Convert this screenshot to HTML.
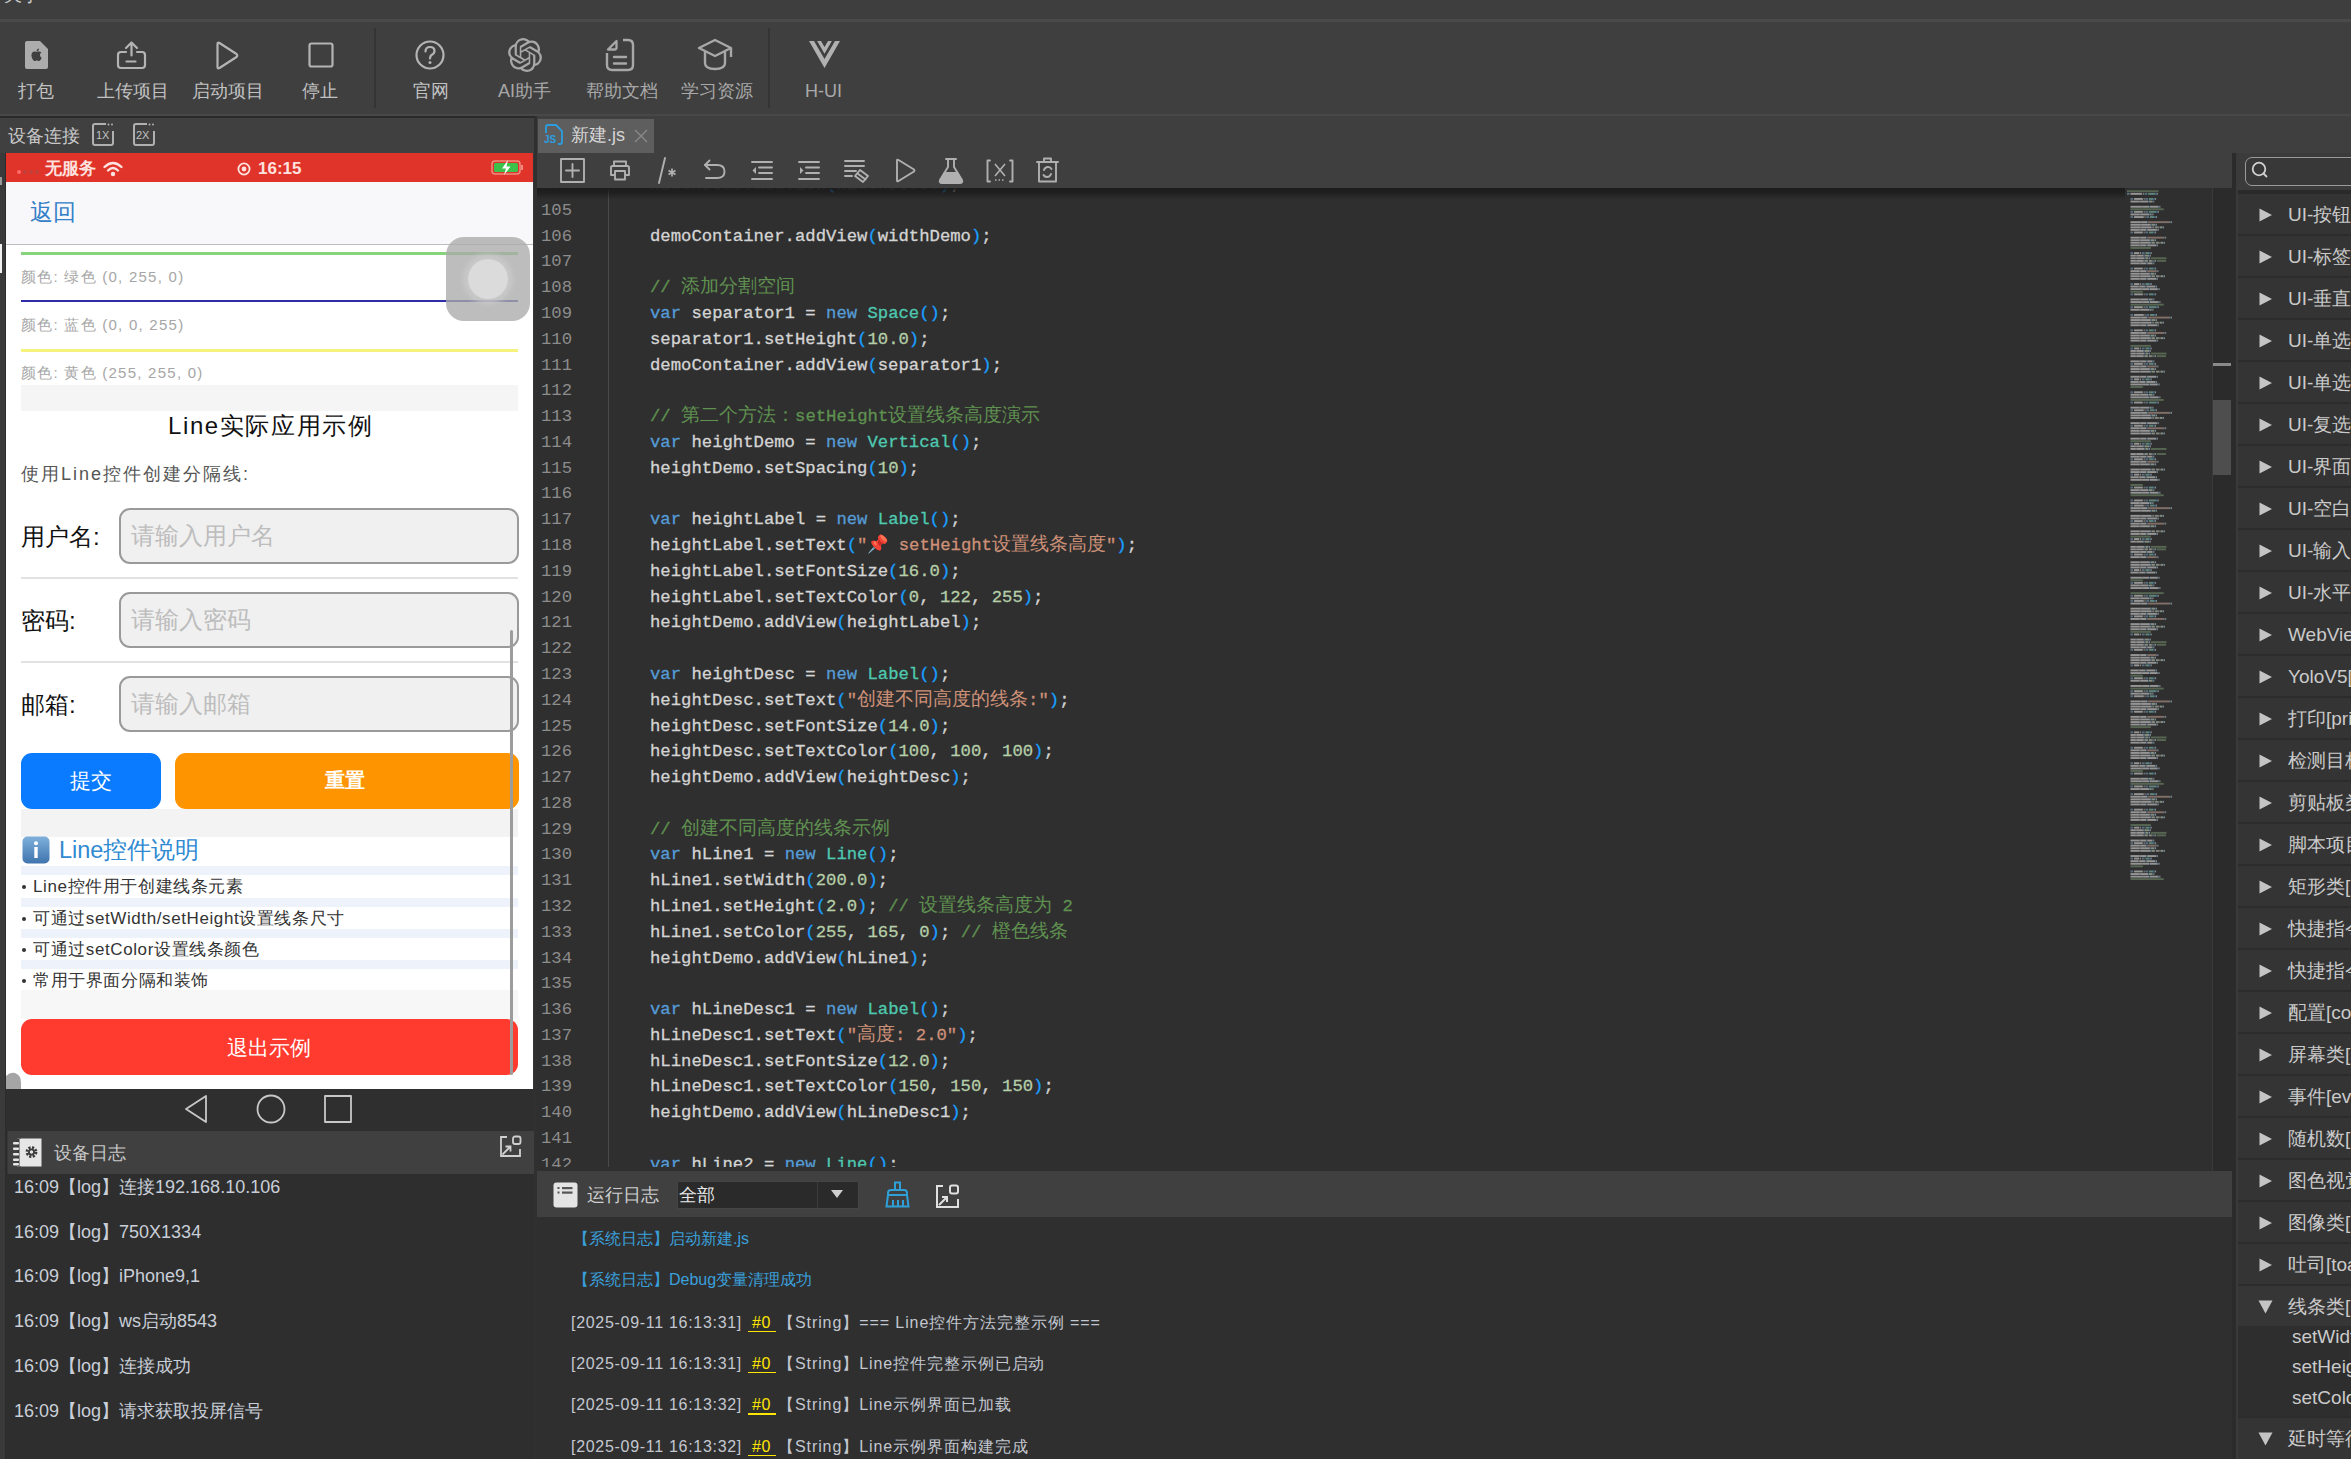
<!DOCTYPE html>
<html><head><meta charset="utf-8">
<style>
*{margin:0;padding:0;box-sizing:border-box}
html,body{width:2351px;height:1459px;overflow:hidden;background:#3e3e3e;font-family:"Liberation Sans",sans-serif;color:#bbb}
.a{position:absolute}
.t{position:absolute;white-space:nowrap;line-height:1}
svg.i{position:absolute;overflow:visible}
.m{font-family:"Liberation Mono",monospace}
</style></head><body>
<div class="a" style="left:0px;top:0px;width:2351px;height:19px;background:#3e3e3e;"></div>
<div class="t" style="left:4px;top:-14px;font-size:18px;color:#ccc;">关于</div>
<div class="a" style="left:0px;top:19px;width:2351px;height:3px;background:#4a4a4a;"></div>
<div class="a" style="left:0px;top:22px;width:2351px;height:94px;background:#3f3f3f;"></div>
<div class="a" style="left:374px;top:28px;width:2px;height:80px;background:#343434;"></div>
<div class="a" style="left:768px;top:28px;width:2px;height:80px;background:#343434;"></div>
<div class="a" style="left:0px;top:114px;width:2351px;height:2px;background:#484848;"></div>
<div class="a" style="left:0px;top:117px;width:535px;height:1342px;background:#363636;"></div>
<div class="a" style="left:0px;top:117px;width:535px;height:36px;background:#404040;"></div>
<div class="a" style="left:0px;top:116px;width:535px;height:1.5px;background:#2a2a2a;"></div>
<div class="a" style="left:0px;top:153px;width:6px;height:1306px;background:#3a3a3a;"></div>
<div class="a" style="left:5px;top:153px;width:1.5px;height:1306px;background:#2c2c2c;"></div>
<div class="a" style="left:0px;top:244px;width:1.5px;height:29px;background:#f0f0f0;"></div>
<div class="a" style="left:0px;top:177px;width:1.5px;height:8px;background:#9a9a9a;"></div>
<div class="a" style="left:534px;top:116px;width:3px;height:1343px;background:#303030;"></div>
<div class="a" style="left:537px;top:116px;width:1814px;height:37px;background:#3f3f3f;"></div>
<div class="a" style="left:537px;top:153px;width:1695px;height:35px;background:#3f3f3f;"></div>
<div class="a" style="left:537px;top:188px;width:1695px;height:983px;background:#2f2f2f;"></div>
<div class="a" style="left:537px;top:1171px;width:1695px;height:288px;background:#2f2f2f;"></div>
<div class="a" style="left:2232px;top:153px;width:6px;height:1306px;background:#2b2b2b;"></div>
<div class="a" style="left:2238px;top:153px;width:113px;height:1306px;background:#2c2c2c;"></div>
<div class="t" style="left:18px;top:82px;font-size:18px;color:#c2c2c2;">打包</div>
<div class="t" style="left:97px;top:82px;font-size:18px;color:#c2c2c2;">上传项目</div>
<div class="t" style="left:192px;top:82px;font-size:18px;color:#c2c2c2;">启动项目</div>
<div class="t" style="left:302px;top:82px;font-size:18px;color:#c2c2c2;">停止</div>
<div class="t" style="left:413px;top:82px;font-size:18px;color:#c2c2c2;">官网</div>
<div class="t" style="left:498px;top:82px;font-size:18px;color:#a8a8a8;">AI助手</div>
<div class="t" style="left:586px;top:82px;font-size:18px;color:#a8a8a8;">帮助文档</div>
<div class="t" style="left:681px;top:82px;font-size:18px;color:#a8a8a8;">学习资源</div>
<div class="t" style="left:805px;top:82px;font-size:18px;color:#aaaaaa;">H-UI</div>
<svg class="i" style="left:23px;top:40px" width="26" height="30" viewBox="0 0 26 30"><path d="M2 3 Q2 1 4 1 L17 1 L25 9 L25 27 Q25 29 23 29 L4 29 Q2 29 2 27 Z" fill="#acacac"/><g transform="translate(7.3 8.5) scale(0.52)"><path fill="#3f3f3f" d="M12.152 6.896c-.948 0-2.415-1.078-3.96-1.04-2.04.027-3.91 1.183-4.961 3.014-2.117 3.675-.546 9.103 1.519 12.09 1.013 1.454 2.208 3.09 3.792 3.039 1.52-.065 2.09-.987 3.935-.987 1.831 0 2.35.987 3.96.948 1.637-.026 2.676-1.48 3.676-2.948 1.156-1.688 1.636-3.325 1.662-3.415-.039-.013-3.182-1.221-3.22-4.857-.026-3.04 2.48-4.494 2.597-4.559-1.429-2.09-3.623-2.324-4.39-2.376-2-.156-3.675 1.09-4.61 1.09zM15.53 3.83c.843-1.012 1.4-2.427 1.245-3.83-1.207.052-2.662.805-3.532 1.818-.78.896-1.454 2.338-1.273 3.714 1.338.104 2.715-.688 3.559-1.701"/></g></svg>
<svg class="i" style="left:116px;top:40px" width="31" height="30" viewBox="0 0 31 30"><path d="M10 12 H5 Q2 12 2 15 V25 Q2 28 5 28 H26 Q29 28 29 25 V15 Q29 12 26 12 H21" fill="none" stroke="#b4b4b4" stroke-width="2.2" stroke-linecap="round" stroke-linejoin="round"/><path d="M15.5 15.5 V3 M10 8 L15.5 2.5 L21 8" fill="none" stroke="#b4b4b4" stroke-width="2.2" stroke-linecap="round" stroke-linejoin="round"/><path d="M10.5 21.5 H19.5" fill="none" stroke="#b4b4b4" stroke-width="2.2" stroke-linecap="round" stroke-linejoin="round"/></svg>
<svg class="i" style="left:215px;top:41px" width="24" height="29" viewBox="0 0 24 29"><path d="M2.5 3 Q2.5 1 4.5 2 L21.5 13 Q23 14.5 21.5 16 L4.5 27 Q2.5 28 2.5 26 Z" fill="none" stroke="#b4b4b4" stroke-width="2.2" stroke-linecap="round" stroke-linejoin="round"/></svg>
<svg class="i" style="left:308px;top:42px" width="26" height="26" viewBox="0 0 26 26"><rect x="1.5" y="1.5" width="23" height="23" rx="2" fill="none" stroke="#b4b4b4" stroke-width="2.2" stroke-linecap="round" stroke-linejoin="round"/></svg>
<svg class="i" style="left:415px;top:40px" width="30" height="30" viewBox="0 0 30 30"><circle cx="15" cy="15" r="13.5" fill="none" stroke="#b4b4b4" stroke-width="2.2" stroke-linecap="round" stroke-linejoin="round"/><path d="M10.5 11.5 Q10.5 7 15 7 Q19.5 7 19.5 11 Q19.5 13.5 16.5 15 Q15 16 15 18.5" fill="none" stroke="#b4b4b4" stroke-width="2.2" stroke-linecap="round" stroke-linejoin="round"/><circle cx="15" cy="22.5" r="1.5" fill="#b4b4b4"/></svg>
<svg class="i" style="left:508px;top:38px" width="34" height="34" viewBox="0 0 24 24"><path fill="#a8a8a8" d="M22.2819 9.8211a5.9847 5.9847 0 0 0-.5157-4.9108 6.0462 6.0462 0 0 0-6.5098-2.9A6.0651 6.0651 0 0 0 4.9807 4.1818a5.9847 5.9847 0 0 0-3.9977 2.9 6.0462 6.0462 0 0 0 .7427 7.0966 5.98 5.98 0 0 0 .511 4.9107 6.051 6.051 0 0 0 6.5146 2.9001A5.9847 5.9847 0 0 0 13.2599 24a6.0557 6.0557 0 0 0 5.7718-4.2058 5.9894 5.9894 0 0 0 3.9977-2.9001 6.0557 6.0557 0 0 0-.7475-7.0729zm-9.022 12.6081a4.4755 4.4755 0 0 1-2.8764-1.0408l.1419-.0804 4.7783-2.7582a.7948.7948 0 0 0 .3927-.6813v-6.7369l2.02 1.1686a.071.071 0 0 1 .038.052v5.5826a4.504 4.504 0 0 1-4.4945 4.4944zm-9.6607-4.1254a4.4708 4.4708 0 0 1-.5346-3.0137l.142.0852 4.783 2.7582a.7712.7712 0 0 0 .7806 0l5.8428-3.3685v2.3324a.0804.0804 0 0 1-.0332.0615L9.74 19.9502a4.4992 4.4992 0 0 1-6.1408-1.6464zM2.3408 7.8956a4.485 4.485 0 0 1 2.3655-1.9728V11.6a.7664.7664 0 0 0 .3879.6765l5.8144 3.3543-2.0201 1.1685a.0757.0757 0 0 1-.071 0l-4.8303-2.7865A4.504 4.504 0 0 1 2.3408 7.872zm16.5963 3.8558L13.1038 8.364 15.1192 7.2a.0757.0757 0 0 1 .071 0l4.8303 2.7913a4.4944 4.4944 0 0 1-.6765 8.1042v-5.6772a.79.79 0 0 0-.407-.667zm2.0107-3.0231l-.142-.0852-4.7735-2.7818a.7759.7759 0 0 0-.7854 0L9.409 9.2297V6.8974a.0662.0662 0 0 1 .0284-.0615l4.8303-2.7866a4.4992 4.4992 0 0 1 6.6802 4.66zM8.3065 12.863l-2.02-1.1638a.0804.0804 0 0 1-.038-.0567V6.0742a4.4992 4.4992 0 0 1 7.3757-3.4537l-.142.0805L8.704 5.459a.7948.7948 0 0 0-.3927.6813zm1.0976-2.3654l2.602-1.4998 2.6069 1.4998v2.9994l-2.5974 1.4997-2.6067-1.4997Z"/></svg>
<svg class="i" style="left:605px;top:38px" width="30" height="34" viewBox="0 0 30 34"><path d="M18 2 H23 Q28 2 28 7 V27 Q28 32 23 32 H7 Q2 32 2 27 V15" fill="none" stroke="#a8a8a8" stroke-width="2.4" stroke-linejoin="round"/><path d="M3 11.5 L11.5 3 V9.5 Q11.5 11.5 9.5 11.5 Z" fill="none" stroke="#a8a8a8" stroke-width="2.3" stroke-linejoin="round"/><path d="M9 19 H21 M9 25.5 H21" stroke="#a8a8a8" stroke-width="2.4" stroke-linecap="round"/></svg>
<svg class="i" style="left:697px;top:38px" width="36" height="34" viewBox="0 0 36 34"><path d="M18 2 L34 10 L18 18 L2 10 Z" fill="none" stroke="#a8a8a8" stroke-width="2.4" stroke-linejoin="round"/><path d="M8 14 V25 Q8 31 18 31 Q28 31 28 25 V14" fill="none" stroke="#a8a8a8" stroke-width="2.4"/><path d="M34 10 V19" stroke="#a8a8a8" stroke-width="2.4"/></svg>
<svg class="i" style="left:809px;top:41px" width="31" height="28" viewBox="0 0 31 28"><path d="M0 0 H12 L15.5 6 L19 0 H31 L15.5 27 Z" fill="#b0b0b0"/><path d="M6 -1 L15.5 15.5 L25 -1" fill="none" stroke="#3f3f3f" stroke-width="2.6"/></svg>
<div class="t" style="left:8px;top:128px;font-size:17.5px;color:#c8c8c8;">设备连接</div>
<svg class="i" style="left:91px;top:122px" width="24" height="25" viewBox="0 0 24 25"><path d="M15 2 H4 Q2 2 2 4 V21 Q2 23 4 23 H20 Q22 23 22 21 V9" fill="none" stroke="#b0b0b0" stroke-width="2"/><circle cx="17.5" cy="2.5" r="1" fill="#b0b0b0"/><circle cx="21" cy="2.5" r="1" fill="#b0b0b0"/></svg>
<div class="t" style="left:96px;top:130px;font-size:11px;color:#c0c0c0;">1X</div>
<svg class="i" style="left:132px;top:122px" width="24" height="25" viewBox="0 0 24 25"><path d="M15 2 H4 Q2 2 2 4 V21 Q2 23 4 23 H20 Q22 23 22 21 V9" fill="none" stroke="#b0b0b0" stroke-width="2"/><circle cx="17.5" cy="2.5" r="1" fill="#b0b0b0"/><circle cx="21" cy="2.5" r="1" fill="#b0b0b0"/></svg>
<div class="t" style="left:136px;top:130px;font-size:11px;color:#c0c0c0;">2X</div>
<div class="a" style="left:6px;top:153px;width:527px;height:936px;background:#ffffff;"></div>
<div class="a" style="left:6px;top:153px;width:527px;height:29px;background:#e0342b;"></div>
<div class="a" style="left:17px;top:170px;width:4px;height:4px;background:#ff6b6b;border-radius:2px"></div>
<div class="a" style="left:23px;top:170px;width:4px;height:4px;background:#c0403a;border-radius:2px"></div>
<div class="a" style="left:29px;top:170px;width:4px;height:4px;background:#c0403a;border-radius:2px"></div>
<div class="a" style="left:35px;top:170px;width:4px;height:4px;background:#c0403a;border-radius:2px"></div>
<div class="t" style="left:45px;top:160px;font-size:17px;color:#fde2df;font-weight:bold">无服务</div>
<svg class="i" style="left:103px;top:161px" width="20" height="16" viewBox="0 0 20 16"><path d="M1.5 6 Q10 -2 18.5 6" fill="none" stroke="#fde2df" stroke-width="2.4" stroke-linecap="round"/><path d="M5 9.5 Q10 4.5 15 9.5" fill="none" stroke="#fde2df" stroke-width="2.4" stroke-linecap="round"/><circle cx="10" cy="13" r="2.2" fill="#fde2df"/></svg>
<svg class="i" style="left:237px;top:162px" width="14" height="14" viewBox="0 0 14 14"><circle cx="7" cy="7" r="5.6" fill="none" stroke="#fde2df" stroke-width="1.8"/><circle cx="7" cy="7" r="2.4" fill="#fde2df"/></svg>
<div class="t" style="left:258px;top:160px;font-size:17px;color:#fde2df;font-weight:bold">16:15</div>
<svg class="i" style="left:491px;top:160px" width="34" height="16" viewBox="0 0 34 16"><rect x="1" y="1" width="28" height="13" rx="3" fill="none" stroke="#f08a80" stroke-width="1.5"/><rect x="3" y="3" width="24" height="9" rx="1.5" fill="#3cc24a"/><rect x="30" y="5" width="2" height="5" fill="#f08a80"/><path d="M17 0 L11 8.5 H15 L13 15 L19.5 6.5 H15.5 Z" fill="#fff"/></svg>
<div class="a" style="left:6px;top:182px;width:527px;height:62px;background:#f8f7f9;"></div>
<div class="a" style="left:6px;top:244px;width:527px;height:1px;background:#bdbdbd;"></div>
<div class="t" style="left:30px;top:201px;font-size:23px;color:#3380c8;">返回</div>
<div class="a" style="left:21px;top:252px;width:497px;height:3px;background:#86d47c;"></div>
<div class="t" style="left:21px;top:269px;font-size:15px;color:#a6a6a6;letter-spacing:1.25px">颜色: 绿色 (0, 255, 0)</div>
<div class="a" style="left:21px;top:300px;width:497px;height:2px;background:#2e2ea8;"></div>
<div class="t" style="left:21px;top:317px;font-size:15px;color:#a6a6a6;letter-spacing:1.25px">颜色: 蓝色 (0, 0, 255)</div>
<div class="a" style="left:21px;top:349px;width:497px;height:3px;background:#f6f27e;"></div>
<div class="t" style="left:21px;top:365px;font-size:15px;color:#a6a6a6;letter-spacing:1.25px">颜色: 黄色 (255, 255, 0)</div>
<div class="a" style="left:21px;top:385px;width:497px;height:26px;background:#f5f5f5;"></div>
<div class="t" style="left:168px;top:414px;font-size:24px;color:#111;letter-spacing:1.6px">Line实际应用示例</div>
<div class="t" style="left:21px;top:465px;font-size:18px;color:#555;letter-spacing:2px">使用Line控件创建分隔线:</div>
<div class="t" style="left:21px;top:525px;font-size:24px;color:#111;">用户名:</div>
<div class="a" style="left:119px;top:508px;width:400px;height:56px;background:#f0f0f0;border:2px solid #9a9a9a;border-radius:11px"></div>
<div class="t" style="left:131px;top:524px;font-size:24px;color:#bdbdbd;">请输入用户名</div>
<div class="t" style="left:21px;top:609px;font-size:24px;color:#111;">密码:</div>
<div class="a" style="left:119px;top:592px;width:400px;height:56px;background:#f0f0f0;border:2px solid #9a9a9a;border-radius:11px"></div>
<div class="t" style="left:131px;top:608px;font-size:24px;color:#bdbdbd;">请输入密码</div>
<div class="t" style="left:21px;top:693px;font-size:24px;color:#111;">邮箱:</div>
<div class="a" style="left:119px;top:676px;width:400px;height:56px;background:#f0f0f0;border:2px solid #9a9a9a;border-radius:11px"></div>
<div class="t" style="left:131px;top:692px;font-size:24px;color:#bdbdbd;">请输入邮箱</div>
<div class="a" style="left:21px;top:577px;width:497px;height:2px;background:#e2e2e2;"></div>
<div class="a" style="left:21px;top:661px;width:497px;height:2px;background:#e2e2e2;"></div>
<div class="a" style="left:21px;top:753px;width:140px;height:56px;background:#0a7bff;border-radius:11px"></div>
<div class="t" style="left:70px;top:770px;font-size:21px;color:#fff;">提交</div>
<div class="a" style="left:175px;top:753px;width:344px;height:56px;background:#fe9500;border-radius:11px"></div>
<div class="t" style="left:325px;top:770px;font-size:20px;color:#fff;font-weight:bold">重置</div>
<div class="a" style="left:21px;top:809px;width:497px;height:28px;background:#f3f3f3;"></div>
<div class="a" style="left:21px;top:837px;width:497px;height:33px;background:#ffffff;"></div>
<svg class="i" style="left:22px;top:836px" width="28" height="28" viewBox="0 0 28 28"><defs><linearGradient id="ig" x1="0" y1="0" x2="0" y2="1"><stop offset="0" stop-color="#7fb0dc"/><stop offset="1" stop-color="#3f74ad"/></linearGradient></defs><rect x="0.5" y="0.5" width="27" height="27" rx="5" fill="url(#ig)"/><rect x="12.3" y="11" width="3.4" height="11" fill="#fff"/><circle cx="14" cy="7.2" r="2" fill="#fff"/></svg>
<div class="t" style="left:59px;top:839px;font-size:23.5px;color:#2f8ad2;">Line控件说明</div>
<div class="a" style="left:21px;top:866px;width:497px;height:9px;background:#edf2fb;"></div>
<div class="a" style="left:21px;top:898px;width:497px;height:9px;background:#edf2fb;"></div>
<div class="a" style="left:21px;top:929px;width:497px;height:9px;background:#edf2fb;"></div>
<div class="a" style="left:21px;top:960px;width:497px;height:9px;background:#edf2fb;"></div>
<div class="a" style="left:22px;top:885.2px;width:4px;height:4px;background:#333;border-radius:2px"></div>
<div class="t" style="left:33px;top:878.2px;font-size:17px;color:#333;letter-spacing:0.6px">Line控件用于创建线条元素</div>
<div class="a" style="left:22px;top:916.5px;width:4px;height:4px;background:#333;border-radius:2px"></div>
<div class="t" style="left:33px;top:909.5px;font-size:17px;color:#333;letter-spacing:0.6px">可通过setWidth/setHeight设置线条尺寸</div>
<div class="a" style="left:22px;top:947.8000000000001px;width:4px;height:4px;background:#333;border-radius:2px"></div>
<div class="t" style="left:33px;top:940.8000000000001px;font-size:17px;color:#333;letter-spacing:0.6px">可通过setColor设置线条颜色</div>
<div class="a" style="left:22px;top:979.1px;width:4px;height:4px;background:#333;border-radius:2px"></div>
<div class="t" style="left:33px;top:972.1px;font-size:17px;color:#333;letter-spacing:0.6px">常用于界面分隔和装饰</div>
<div class="a" style="left:21px;top:990px;width:497px;height:29px;background:#f7f7f7;"></div>
<div class="a" style="left:21px;top:1019px;width:497px;height:56px;background:#ff3b30;border-radius:11px"></div>
<div class="t" style="left:227px;top:1037px;font-size:21px;color:#fff;">退出示例</div>
<div class="a" style="left:510px;top:630px;width:2.5px;height:445px;background:#9c9c9c;border-radius:2px"></div>
<div class="a" style="left:446px;top:237px;width:84px;height:84px;background:rgba(170,170,170,0.78);border-radius:18px"></div>
<div class="a" style="left:468px;top:259px;width:40px;height:40px;background:rgba(220,220,220,0.95);border-radius:20px;box-shadow:0 0 5px 5px rgba(205,205,205,0.7)"></div>
<svg class="i" style="left:6px;top:1072px" width="16" height="17" viewBox="0 0 16 17"><path d="M0 4 Q4 0 9 1 Q15 3 15 11 V17 H0 Z" fill="#a5a5a5"/></svg>
<div class="a" style="left:6px;top:1174px;width:528px;height:285px;background:#2e2e2e;"></div>
<div class="a" style="left:6px;top:1089px;width:528px;height:42px;background:#2f2f2f;"></div>
<svg class="i" style="left:184px;top:1094px" width="24" height="30" viewBox="0 0 24 30"><path d="M22 2 L2 15 L22 28 Z" fill="none" stroke="#c8c8c8" stroke-width="1.8" stroke-linejoin="round"/></svg>
<svg class="i" style="left:256px;top:1094px" width="30" height="30" viewBox="0 0 30 30"><circle cx="15" cy="15" r="13.5" fill="none" stroke="#c8c8c8" stroke-width="1.8" stroke-linejoin="round"/></svg>
<svg class="i" style="left:324px;top:1095px" width="28" height="28" viewBox="0 0 28 28"><rect x="1" y="1" width="26" height="26" fill="none" stroke="#c8c8c8" stroke-width="1.8" stroke-linejoin="round"/></svg>
<div class="a" style="left:8px;top:1131px;width:526px;height:43px;background:#404040;"></div>
<svg class="i" style="left:13px;top:1138px" width="30" height="29" viewBox="0 0 30 29"><rect x="4" y="0.5" width="24.5" height="28" fill="#e6e6e6"/><rect x="4" y="0.5" width="4" height="28" fill="#3a3a3a"/><g fill="#e6e6e6"><rect x="0" y="4" width="6" height="2.5" rx="1"/><rect x="0" y="9.5" width="6" height="2.5" rx="1"/><rect x="0" y="15" width="6" height="2.5" rx="1"/><rect x="0" y="20.5" width="6" height="2.5" rx="1"/><rect x="0" y="25" width="6" height="2.5" rx="1"/></g><rect x="6.5" y="1" width="1.5" height="27" fill="#e6e6e6"/><circle cx="18.5" cy="14" r="4.6" fill="none" stroke="#3a3a3a" stroke-width="2.6" stroke-dasharray="2.2 1.4"/><circle cx="18.5" cy="14" r="2.6" fill="none" stroke="#3a3a3a" stroke-width="1.8"/></svg>
<div class="t" style="left:54px;top:1144px;font-size:18px;color:#c8c8c8;">设备日志</div>
<svg class="i" style="left:499px;top:1135px" width="24" height="24" viewBox="0 0 24 24"><path d="M8 2 H2 V21 H21 V14" fill="none" stroke="#d0d0d0" stroke-width="1.8"/><rect x="14" y="1.5" width="7.5" height="7.5" rx="2" fill="none" stroke="#d0d0d0" stroke-width="1.8"/><path d="M3.5 19.5 L11.5 11.5 M6.5 11.5 H11.5 V16.5" fill="none" stroke="#d0d0d0" stroke-width="1.8"/></svg>
<div class="t" style="left:14px;top:1178.0px;font-size:18px;color:#c9ced8;">16:09【log】连接192.168.10.106</div>
<div class="t" style="left:14px;top:1222.7px;font-size:18px;color:#c9ced8;">16:09【log】750X1334</div>
<div class="t" style="left:14px;top:1267.4px;font-size:18px;color:#c9ced8;">16:09【log】iPhone9,1</div>
<div class="t" style="left:14px;top:1312.1px;font-size:18px;color:#c9ced8;">16:09【log】ws启动8543</div>
<div class="t" style="left:14px;top:1356.8px;font-size:18px;color:#c9ced8;">16:09【log】连接成功</div>
<div class="t" style="left:14px;top:1401.5px;font-size:18px;color:#c9ced8;">16:09【log】请求获取投屏信号</div>
<div class="a" style="left:538px;top:119px;width:116px;height:34px;background:#5e5e5e;"></div>
<svg class="i" style="left:543px;top:124px" width="21" height="21" viewBox="0 0 21 21"><path d="M3 9 V3 Q3 1 5 1 H13 L19 7 V18 Q19 20 17 20 H15" fill="none" stroke="#2c9ee0" stroke-width="1.8"/><text x="1" y="18.5" font-family="Liberation Sans" font-size="10" font-weight="bold" fill="#2c9ee0">JS</text></svg>
<div class="t" style="left:571px;top:126px;font-size:18px;color:#d6d6d6;">新建.js</div>
<svg class="i" style="left:634px;top:129px" width="14" height="14" viewBox="0 0 14 14"><path d="M1 1 L13 13 M13 1 L1 13" stroke="#8a8a8a" stroke-width="1.3"/></svg>
<svg class="i" style="left:560px;top:158px" width="25" height="25" viewBox="0 0 25 25"><rect x="1" y="1" width="23" height="23" fill="none" stroke="#b0b0b0" stroke-width="1.9" stroke-linejoin="round" stroke-linecap="round"/><path d="M12.5 6 V19 M6 12.5 H19" fill="none" stroke="#b0b0b0" stroke-width="1.9" stroke-linejoin="round" stroke-linecap="round"/></svg>
<svg class="i" style="left:609px;top:159px" width="22" height="22" viewBox="0 0 22 22"><path d="M5 7 V2.5 H17 V7" fill="none" stroke="#b0b0b0" stroke-width="1.9" stroke-linejoin="round" stroke-linecap="round"/><path d="M5 16 H2 V8.5 Q2 7 3.5 7 H18.5 Q20 7 20 8.5 V16 H17" fill="none" stroke="#b0b0b0" stroke-width="1.9" stroke-linejoin="round" stroke-linecap="round"/><rect x="6" y="12" width="10" height="8.5" fill="none" stroke="#b0b0b0" stroke-width="1.9" stroke-linejoin="round" stroke-linecap="round"/></svg>
<svg class="i" style="left:657px;top:157px" width="20" height="27" viewBox="0 0 20 27"><path d="M8 1 L2 26" fill="none" stroke="#b0b0b0" stroke-width="1.9" stroke-linejoin="round" stroke-linecap="round"/><path d="M15 11.5 V19.5 M11.5 13.5 L18.5 17.5 M18.5 13.5 L11.5 17.5" stroke="#b0b0b0" stroke-width="1.7"/></svg>
<svg class="i" style="left:703px;top:159px" width="24" height="22" viewBox="0 0 24 22"><path d="M2 6 H14 Q21.5 6 21.5 12.5 Q21.5 19 14 19 H3" fill="none" stroke="#b0b0b0" stroke-width="1.9" stroke-linejoin="round" stroke-linecap="round"/><path d="M6.5 1.5 L2 6 L6.5 10.5" fill="none" stroke="#b0b0b0" stroke-width="1.9" stroke-linejoin="round" stroke-linecap="round"/></svg>
<svg class="i" style="left:751px;top:160px" width="22" height="22" viewBox="0 0 22 22"><path d="M1 2 H21 M8 7.5 H21 M8 13 H21 M1 19 H21" fill="none" stroke="#b0b0b0" stroke-width="1.9" stroke-linejoin="round" stroke-linecap="round"/><path d="M5 7 L1.5 10.5 L5 14 Z" fill="#b0b0b0"/></svg>
<svg class="i" style="left:798px;top:160px" width="22" height="22" viewBox="0 0 22 22"><path d="M1 2 H21 M8 7.5 H21 M8 13 H21 M1 19 H21" fill="none" stroke="#b0b0b0" stroke-width="1.9" stroke-linejoin="round" stroke-linecap="round"/><path d="M2 7 L5.5 10.5 L2 14 Z" fill="#b0b0b0"/></svg>
<svg class="i" style="left:844px;top:159px" width="26" height="24" viewBox="0 0 26 24"><path d="M1 2 H20 M1 7 H20 M1 12 H12 M1 17 H8" fill="none" stroke="#b0b0b0" stroke-width="1.9" stroke-linejoin="round" stroke-linecap="round"/><path d="M16 11 L24 17 L19 23 L11 17 Z" fill="none" stroke="#b0b0b0" stroke-width="1.9" stroke-linejoin="round" stroke-linecap="round"/><path d="M13.5 14.5 L21.5 20.5" fill="none" stroke="#b0b0b0" stroke-width="1.9" stroke-linejoin="round" stroke-linecap="round"/></svg>
<svg class="i" style="left:895px;top:158px" width="21" height="25" viewBox="0 0 21 25"><path d="M2 2.5 Q2 1 3.5 2 L19 11.5 Q20 12.5 19 13.5 L3.5 23 Q2 24 2 22.5 Z" fill="none" stroke="#b0b0b0" stroke-width="1.9" stroke-linejoin="round" stroke-linecap="round"/></svg>
<svg class="i" style="left:938px;top:157px" width="26" height="27" viewBox="0 0 26 27"><path d="M8 2 H18 M10 2 V10 L2 23 Q1 26 4 26 H22 Q25 26 24 23 L16 10 V2" fill="none" stroke="#b0b0b0" stroke-width="1.9" stroke-linejoin="round" stroke-linecap="round"/><path d="M6 15 H20 L24 23 Q25 25.5 22 25.5 H4 Q1 25.5 2 23 Z" fill="#b0b0b0"/></svg>
<svg class="i" style="left:986px;top:159px" width="28" height="24" viewBox="0 0 28 24"><path d="M4 1.5 H1.5 V22.5 H4 M24 1.5 H26.5 V22.5 H24" fill="none" stroke="#b0b0b0" stroke-width="1.9" stroke-linejoin="round" stroke-linecap="round"/><path d="M9 5 L19 17 M19 5 L9 17" stroke="#b0b0b0" stroke-width="1.6"/><path d="M9 21 H19" stroke="#b0b0b0" stroke-width="1.6" stroke-dasharray="1.5 2"/></svg>
<svg class="i" style="left:1036px;top:157px" width="23" height="26" viewBox="0 0 23 26"><path d="M1 5 H22 M8 5 V1.5 H15 V5" fill="none" stroke="#b0b0b0" stroke-width="1.9" stroke-linejoin="round" stroke-linecap="round"/><path d="M3 5 V24.5 H20 V5" fill="none" stroke="#b0b0b0" stroke-width="1.9" stroke-linejoin="round" stroke-linecap="round"/><path d="M8 13 Q9 10 12 10 Q14.5 10 15.5 12 M15 17 Q14 20 11 20 Q8.5 20 7.5 18" fill="none" stroke="#b0b0b0" stroke-width="1.9" stroke-linejoin="round" stroke-linecap="round"/></svg>
<div class="a" style="left:537px;top:188px;width:1588px;height:10px;background:linear-gradient(#1f1f1f,rgba(47,47,47,0));"></div>
<div class="a" style="left:608px;top:188px;width:1px;height:979px;background:#4a4a4a;"></div>
<div class="a" style="left:2212px;top:188px;width:1px;height:983px;background:#3a3a3a;"></div>
<div class="a" style="left:2213px;top:188px;width:19px;height:983px;background:#2b2b2b;"></div>
<div class="a" style="left:2213px;top:363px;width:18px;height:3px;background:#8a8a8a;"></div>
<div class="a" style="left:2213px;top:400px;width:18px;height:75px;background:#4e4e4e;"></div>
<div class="a" style="left:2236px;top:153px;width:2px;height:1306px;background:#3a3a3a;"></div>
<div class="a" style="left:537px;top:188px;width:1588px;height:979px;overflow:hidden">
<div class="t m" style="left:4px;top:-15.87px;height:25.78px;line-height:25.78px;font-size:17.25px;color:#8c8c8c">104</div>
<div class="t m" style="left:113px;top:-15.87px;height:25.78px;line-height:25.78px;font-size:17.25px;-webkit-text-stroke:0.3px"><span style="color:#d4d4d4">widthDemo</span><span style="color:#d4d4d4">.</span><span style="color:#d4d4d4">addView</span><span style="color:#1a9fff">(</span><span style="color:#d4d4d4">widthDesc3</span><span style="color:#1a9fff">)</span><span style="color:#d4d4d4">;</span></div>
<div class="t m" style="left:4px;top:9.91px;height:25.78px;line-height:25.78px;font-size:17.25px;color:#8c8c8c">105</div>
<div class="t m" style="left:4px;top:35.69px;height:25.78px;line-height:25.78px;font-size:17.25px;color:#8c8c8c">106</div>
<div class="t m" style="left:113px;top:35.69px;height:25.78px;line-height:25.78px;font-size:17.25px;-webkit-text-stroke:0.3px"><span style="color:#d4d4d4">demoContainer</span><span style="color:#d4d4d4">.</span><span style="color:#d4d4d4">addView</span><span style="color:#1a9fff">(</span><span style="color:#d4d4d4">widthDemo</span><span style="color:#1a9fff">)</span><span style="color:#d4d4d4">;</span></div>
<div class="t m" style="left:4px;top:61.47px;height:25.78px;line-height:25.78px;font-size:17.25px;color:#8c8c8c">107</div>
<div class="t m" style="left:4px;top:87.25px;height:25.78px;line-height:25.78px;font-size:17.25px;color:#8c8c8c">108</div>
<div class="t m" style="left:113px;top:87.25px;height:25.78px;line-height:25.78px;font-size:17.25px;-webkit-text-stroke:0.3px"><span style="color:#5f9150">// <span style="font-size:18.5px;-webkit-text-stroke:0">添加分割空间</span></span></div>
<div class="t m" style="left:4px;top:113.03px;height:25.78px;line-height:25.78px;font-size:17.25px;color:#8c8c8c">109</div>
<div class="t m" style="left:113px;top:113.03px;height:25.78px;line-height:25.78px;font-size:17.25px;-webkit-text-stroke:0.3px"><span style="color:#569cd6">var</span><span style="color:#d4d4d4"> </span><span style="color:#d4d4d4">separator1</span><span style="color:#d4d4d4"> </span><span style="color:#d4d4d4">=</span><span style="color:#d4d4d4"> </span><span style="color:#569cd6">new</span><span style="color:#d4d4d4"> </span><span style="color:#4ec9b0">Space</span><span style="color:#1a9fff">(</span><span style="color:#1a9fff">)</span><span style="color:#d4d4d4">;</span></div>
<div class="t m" style="left:4px;top:138.81px;height:25.78px;line-height:25.78px;font-size:17.25px;color:#8c8c8c">110</div>
<div class="t m" style="left:113px;top:138.81px;height:25.78px;line-height:25.78px;font-size:17.25px;-webkit-text-stroke:0.3px"><span style="color:#d4d4d4">separator1</span><span style="color:#d4d4d4">.</span><span style="color:#d4d4d4">setHeight</span><span style="color:#1a9fff">(</span><span style="color:#b5cea8">10.0</span><span style="color:#1a9fff">)</span><span style="color:#d4d4d4">;</span></div>
<div class="t m" style="left:4px;top:164.59px;height:25.78px;line-height:25.78px;font-size:17.25px;color:#8c8c8c">111</div>
<div class="t m" style="left:113px;top:164.59px;height:25.78px;line-height:25.78px;font-size:17.25px;-webkit-text-stroke:0.3px"><span style="color:#d4d4d4">demoContainer</span><span style="color:#d4d4d4">.</span><span style="color:#d4d4d4">addView</span><span style="color:#1a9fff">(</span><span style="color:#d4d4d4">separator1</span><span style="color:#1a9fff">)</span><span style="color:#d4d4d4">;</span></div>
<div class="t m" style="left:4px;top:190.37px;height:25.78px;line-height:25.78px;font-size:17.25px;color:#8c8c8c">112</div>
<div class="t m" style="left:4px;top:216.15px;height:25.78px;line-height:25.78px;font-size:17.25px;color:#8c8c8c">113</div>
<div class="t m" style="left:113px;top:216.15px;height:25.78px;line-height:25.78px;font-size:17.25px;-webkit-text-stroke:0.3px"><span style="color:#5f9150">// <span style="font-size:18.5px;-webkit-text-stroke:0">第二个方法：</span>setHeight<span style="font-size:18.5px;-webkit-text-stroke:0">设置线条高度演示</span></span></div>
<div class="t m" style="left:4px;top:241.93px;height:25.78px;line-height:25.78px;font-size:17.25px;color:#8c8c8c">114</div>
<div class="t m" style="left:113px;top:241.93px;height:25.78px;line-height:25.78px;font-size:17.25px;-webkit-text-stroke:0.3px"><span style="color:#569cd6">var</span><span style="color:#d4d4d4"> </span><span style="color:#d4d4d4">heightDemo</span><span style="color:#d4d4d4"> </span><span style="color:#d4d4d4">=</span><span style="color:#d4d4d4"> </span><span style="color:#569cd6">new</span><span style="color:#d4d4d4"> </span><span style="color:#4ec9b0">Vertical</span><span style="color:#1a9fff">(</span><span style="color:#1a9fff">)</span><span style="color:#d4d4d4">;</span></div>
<div class="t m" style="left:4px;top:267.71px;height:25.78px;line-height:25.78px;font-size:17.25px;color:#8c8c8c">115</div>
<div class="t m" style="left:113px;top:267.71px;height:25.78px;line-height:25.78px;font-size:17.25px;-webkit-text-stroke:0.3px"><span style="color:#d4d4d4">heightDemo</span><span style="color:#d4d4d4">.</span><span style="color:#d4d4d4">setSpacing</span><span style="color:#1a9fff">(</span><span style="color:#b5cea8">10</span><span style="color:#1a9fff">)</span><span style="color:#d4d4d4">;</span></div>
<div class="t m" style="left:4px;top:293.49px;height:25.78px;line-height:25.78px;font-size:17.25px;color:#8c8c8c">116</div>
<div class="t m" style="left:4px;top:319.27px;height:25.78px;line-height:25.78px;font-size:17.25px;color:#8c8c8c">117</div>
<div class="t m" style="left:113px;top:319.27px;height:25.78px;line-height:25.78px;font-size:17.25px;-webkit-text-stroke:0.3px"><span style="color:#569cd6">var</span><span style="color:#d4d4d4"> </span><span style="color:#d4d4d4">heightLabel</span><span style="color:#d4d4d4"> </span><span style="color:#d4d4d4">=</span><span style="color:#d4d4d4"> </span><span style="color:#569cd6">new</span><span style="color:#d4d4d4"> </span><span style="color:#4ec9b0">Label</span><span style="color:#1a9fff">(</span><span style="color:#1a9fff">)</span><span style="color:#d4d4d4">;</span></div>
<div class="t m" style="left:4px;top:345.05px;height:25.78px;line-height:25.78px;font-size:17.25px;color:#8c8c8c">118</div>
<div class="t m" style="left:113px;top:345.05px;height:25.78px;line-height:25.78px;font-size:17.25px;-webkit-text-stroke:0.3px"><span style="color:#d4d4d4">heightLabel</span><span style="color:#d4d4d4">.</span><span style="color:#d4d4d4">setText</span><span style="color:#1a9fff">(</span><span style="color:#ce9178">"📌 setHeight<span style="font-size:18.5px;-webkit-text-stroke:0">设置线条高度</span>"</span><span style="color:#1a9fff">)</span><span style="color:#d4d4d4">;</span></div>
<div class="t m" style="left:4px;top:370.83px;height:25.78px;line-height:25.78px;font-size:17.25px;color:#8c8c8c">119</div>
<div class="t m" style="left:113px;top:370.83px;height:25.78px;line-height:25.78px;font-size:17.25px;-webkit-text-stroke:0.3px"><span style="color:#d4d4d4">heightLabel</span><span style="color:#d4d4d4">.</span><span style="color:#d4d4d4">setFontSize</span><span style="color:#1a9fff">(</span><span style="color:#b5cea8">16.0</span><span style="color:#1a9fff">)</span><span style="color:#d4d4d4">;</span></div>
<div class="t m" style="left:4px;top:396.61px;height:25.78px;line-height:25.78px;font-size:17.25px;color:#8c8c8c">120</div>
<div class="t m" style="left:113px;top:396.61px;height:25.78px;line-height:25.78px;font-size:17.25px;-webkit-text-stroke:0.3px"><span style="color:#d4d4d4">heightLabel</span><span style="color:#d4d4d4">.</span><span style="color:#d4d4d4">setTextColor</span><span style="color:#1a9fff">(</span><span style="color:#b5cea8">0</span><span style="color:#d4d4d4">,</span><span style="color:#d4d4d4"> </span><span style="color:#b5cea8">122</span><span style="color:#d4d4d4">,</span><span style="color:#d4d4d4"> </span><span style="color:#b5cea8">255</span><span style="color:#1a9fff">)</span><span style="color:#d4d4d4">;</span></div>
<div class="t m" style="left:4px;top:422.39px;height:25.78px;line-height:25.78px;font-size:17.25px;color:#8c8c8c">121</div>
<div class="t m" style="left:113px;top:422.39px;height:25.78px;line-height:25.78px;font-size:17.25px;-webkit-text-stroke:0.3px"><span style="color:#d4d4d4">heightDemo</span><span style="color:#d4d4d4">.</span><span style="color:#d4d4d4">addView</span><span style="color:#1a9fff">(</span><span style="color:#d4d4d4">heightLabel</span><span style="color:#1a9fff">)</span><span style="color:#d4d4d4">;</span></div>
<div class="t m" style="left:4px;top:448.17px;height:25.78px;line-height:25.78px;font-size:17.25px;color:#8c8c8c">122</div>
<div class="t m" style="left:4px;top:473.95px;height:25.78px;line-height:25.78px;font-size:17.25px;color:#8c8c8c">123</div>
<div class="t m" style="left:113px;top:473.95px;height:25.78px;line-height:25.78px;font-size:17.25px;-webkit-text-stroke:0.3px"><span style="color:#569cd6">var</span><span style="color:#d4d4d4"> </span><span style="color:#d4d4d4">heightDesc</span><span style="color:#d4d4d4"> </span><span style="color:#d4d4d4">=</span><span style="color:#d4d4d4"> </span><span style="color:#569cd6">new</span><span style="color:#d4d4d4"> </span><span style="color:#4ec9b0">Label</span><span style="color:#1a9fff">(</span><span style="color:#1a9fff">)</span><span style="color:#d4d4d4">;</span></div>
<div class="t m" style="left:4px;top:499.73px;height:25.78px;line-height:25.78px;font-size:17.25px;color:#8c8c8c">124</div>
<div class="t m" style="left:113px;top:499.73px;height:25.78px;line-height:25.78px;font-size:17.25px;-webkit-text-stroke:0.3px"><span style="color:#d4d4d4">heightDesc</span><span style="color:#d4d4d4">.</span><span style="color:#d4d4d4">setText</span><span style="color:#1a9fff">(</span><span style="color:#ce9178">"<span style="font-size:18.5px;-webkit-text-stroke:0">创建不同高度的线条</span>:"</span><span style="color:#1a9fff">)</span><span style="color:#d4d4d4">;</span></div>
<div class="t m" style="left:4px;top:525.51px;height:25.78px;line-height:25.78px;font-size:17.25px;color:#8c8c8c">125</div>
<div class="t m" style="left:113px;top:525.51px;height:25.78px;line-height:25.78px;font-size:17.25px;-webkit-text-stroke:0.3px"><span style="color:#d4d4d4">heightDesc</span><span style="color:#d4d4d4">.</span><span style="color:#d4d4d4">setFontSize</span><span style="color:#1a9fff">(</span><span style="color:#b5cea8">14.0</span><span style="color:#1a9fff">)</span><span style="color:#d4d4d4">;</span></div>
<div class="t m" style="left:4px;top:551.29px;height:25.78px;line-height:25.78px;font-size:17.25px;color:#8c8c8c">126</div>
<div class="t m" style="left:113px;top:551.29px;height:25.78px;line-height:25.78px;font-size:17.25px;-webkit-text-stroke:0.3px"><span style="color:#d4d4d4">heightDesc</span><span style="color:#d4d4d4">.</span><span style="color:#d4d4d4">setTextColor</span><span style="color:#1a9fff">(</span><span style="color:#b5cea8">100</span><span style="color:#d4d4d4">,</span><span style="color:#d4d4d4"> </span><span style="color:#b5cea8">100</span><span style="color:#d4d4d4">,</span><span style="color:#d4d4d4"> </span><span style="color:#b5cea8">100</span><span style="color:#1a9fff">)</span><span style="color:#d4d4d4">;</span></div>
<div class="t m" style="left:4px;top:577.07px;height:25.78px;line-height:25.78px;font-size:17.25px;color:#8c8c8c">127</div>
<div class="t m" style="left:113px;top:577.07px;height:25.78px;line-height:25.78px;font-size:17.25px;-webkit-text-stroke:0.3px"><span style="color:#d4d4d4">heightDemo</span><span style="color:#d4d4d4">.</span><span style="color:#d4d4d4">addView</span><span style="color:#1a9fff">(</span><span style="color:#d4d4d4">heightDesc</span><span style="color:#1a9fff">)</span><span style="color:#d4d4d4">;</span></div>
<div class="t m" style="left:4px;top:602.85px;height:25.78px;line-height:25.78px;font-size:17.25px;color:#8c8c8c">128</div>
<div class="t m" style="left:4px;top:628.63px;height:25.78px;line-height:25.78px;font-size:17.25px;color:#8c8c8c">129</div>
<div class="t m" style="left:113px;top:628.63px;height:25.78px;line-height:25.78px;font-size:17.25px;-webkit-text-stroke:0.3px"><span style="color:#5f9150">// <span style="font-size:18.5px;-webkit-text-stroke:0">创建不同高度的线条示例</span></span></div>
<div class="t m" style="left:4px;top:654.41px;height:25.78px;line-height:25.78px;font-size:17.25px;color:#8c8c8c">130</div>
<div class="t m" style="left:113px;top:654.41px;height:25.78px;line-height:25.78px;font-size:17.25px;-webkit-text-stroke:0.3px"><span style="color:#569cd6">var</span><span style="color:#d4d4d4"> </span><span style="color:#d4d4d4">hLine1</span><span style="color:#d4d4d4"> </span><span style="color:#d4d4d4">=</span><span style="color:#d4d4d4"> </span><span style="color:#569cd6">new</span><span style="color:#d4d4d4"> </span><span style="color:#4ec9b0">Line</span><span style="color:#1a9fff">(</span><span style="color:#1a9fff">)</span><span style="color:#d4d4d4">;</span></div>
<div class="t m" style="left:4px;top:680.19px;height:25.78px;line-height:25.78px;font-size:17.25px;color:#8c8c8c">131</div>
<div class="t m" style="left:113px;top:680.19px;height:25.78px;line-height:25.78px;font-size:17.25px;-webkit-text-stroke:0.3px"><span style="color:#d4d4d4">hLine1</span><span style="color:#d4d4d4">.</span><span style="color:#d4d4d4">setWidth</span><span style="color:#1a9fff">(</span><span style="color:#b5cea8">200.0</span><span style="color:#1a9fff">)</span><span style="color:#d4d4d4">;</span></div>
<div class="t m" style="left:4px;top:705.97px;height:25.78px;line-height:25.78px;font-size:17.25px;color:#8c8c8c">132</div>
<div class="t m" style="left:113px;top:705.97px;height:25.78px;line-height:25.78px;font-size:17.25px;-webkit-text-stroke:0.3px"><span style="color:#d4d4d4">hLine1</span><span style="color:#d4d4d4">.</span><span style="color:#d4d4d4">setHeight</span><span style="color:#1a9fff">(</span><span style="color:#b5cea8">2.0</span><span style="color:#1a9fff">)</span><span style="color:#d4d4d4">;</span><span style="color:#d4d4d4"> </span><span style="color:#5f9150">// <span style="font-size:18.5px;-webkit-text-stroke:0">设置线条高度为</span> 2</span></div>
<div class="t m" style="left:4px;top:731.75px;height:25.78px;line-height:25.78px;font-size:17.25px;color:#8c8c8c">133</div>
<div class="t m" style="left:113px;top:731.75px;height:25.78px;line-height:25.78px;font-size:17.25px;-webkit-text-stroke:0.3px"><span style="color:#d4d4d4">hLine1</span><span style="color:#d4d4d4">.</span><span style="color:#d4d4d4">setColor</span><span style="color:#1a9fff">(</span><span style="color:#b5cea8">255</span><span style="color:#d4d4d4">,</span><span style="color:#d4d4d4"> </span><span style="color:#b5cea8">165</span><span style="color:#d4d4d4">,</span><span style="color:#d4d4d4"> </span><span style="color:#b5cea8">0</span><span style="color:#1a9fff">)</span><span style="color:#d4d4d4">;</span><span style="color:#d4d4d4"> </span><span style="color:#5f9150">// <span style="font-size:18.5px;-webkit-text-stroke:0">橙色线条</span></span></div>
<div class="t m" style="left:4px;top:757.53px;height:25.78px;line-height:25.78px;font-size:17.25px;color:#8c8c8c">134</div>
<div class="t m" style="left:113px;top:757.53px;height:25.78px;line-height:25.78px;font-size:17.25px;-webkit-text-stroke:0.3px"><span style="color:#d4d4d4">heightDemo</span><span style="color:#d4d4d4">.</span><span style="color:#d4d4d4">addView</span><span style="color:#1a9fff">(</span><span style="color:#d4d4d4">hLine1</span><span style="color:#1a9fff">)</span><span style="color:#d4d4d4">;</span></div>
<div class="t m" style="left:4px;top:783.31px;height:25.78px;line-height:25.78px;font-size:17.25px;color:#8c8c8c">135</div>
<div class="t m" style="left:4px;top:809.09px;height:25.78px;line-height:25.78px;font-size:17.25px;color:#8c8c8c">136</div>
<div class="t m" style="left:113px;top:809.09px;height:25.78px;line-height:25.78px;font-size:17.25px;-webkit-text-stroke:0.3px"><span style="color:#569cd6">var</span><span style="color:#d4d4d4"> </span><span style="color:#d4d4d4">hLineDesc1</span><span style="color:#d4d4d4"> </span><span style="color:#d4d4d4">=</span><span style="color:#d4d4d4"> </span><span style="color:#569cd6">new</span><span style="color:#d4d4d4"> </span><span style="color:#4ec9b0">Label</span><span style="color:#1a9fff">(</span><span style="color:#1a9fff">)</span><span style="color:#d4d4d4">;</span></div>
<div class="t m" style="left:4px;top:834.87px;height:25.78px;line-height:25.78px;font-size:17.25px;color:#8c8c8c">137</div>
<div class="t m" style="left:113px;top:834.87px;height:25.78px;line-height:25.78px;font-size:17.25px;-webkit-text-stroke:0.3px"><span style="color:#d4d4d4">hLineDesc1</span><span style="color:#d4d4d4">.</span><span style="color:#d4d4d4">setText</span><span style="color:#1a9fff">(</span><span style="color:#ce9178">"<span style="font-size:18.5px;-webkit-text-stroke:0">高度</span>: 2.0"</span><span style="color:#1a9fff">)</span><span style="color:#d4d4d4">;</span></div>
<div class="t m" style="left:4px;top:860.65px;height:25.78px;line-height:25.78px;font-size:17.25px;color:#8c8c8c">138</div>
<div class="t m" style="left:113px;top:860.65px;height:25.78px;line-height:25.78px;font-size:17.25px;-webkit-text-stroke:0.3px"><span style="color:#d4d4d4">hLineDesc1</span><span style="color:#d4d4d4">.</span><span style="color:#d4d4d4">setFontSize</span><span style="color:#1a9fff">(</span><span style="color:#b5cea8">12.0</span><span style="color:#1a9fff">)</span><span style="color:#d4d4d4">;</span></div>
<div class="t m" style="left:4px;top:886.43px;height:25.78px;line-height:25.78px;font-size:17.25px;color:#8c8c8c">139</div>
<div class="t m" style="left:113px;top:886.43px;height:25.78px;line-height:25.78px;font-size:17.25px;-webkit-text-stroke:0.3px"><span style="color:#d4d4d4">hLineDesc1</span><span style="color:#d4d4d4">.</span><span style="color:#d4d4d4">setTextColor</span><span style="color:#1a9fff">(</span><span style="color:#b5cea8">150</span><span style="color:#d4d4d4">,</span><span style="color:#d4d4d4"> </span><span style="color:#b5cea8">150</span><span style="color:#d4d4d4">,</span><span style="color:#d4d4d4"> </span><span style="color:#b5cea8">150</span><span style="color:#1a9fff">)</span><span style="color:#d4d4d4">;</span></div>
<div class="t m" style="left:4px;top:912.21px;height:25.78px;line-height:25.78px;font-size:17.25px;color:#8c8c8c">140</div>
<div class="t m" style="left:113px;top:912.21px;height:25.78px;line-height:25.78px;font-size:17.25px;-webkit-text-stroke:0.3px"><span style="color:#d4d4d4">heightDemo</span><span style="color:#d4d4d4">.</span><span style="color:#d4d4d4">addView</span><span style="color:#1a9fff">(</span><span style="color:#d4d4d4">hLineDesc1</span><span style="color:#1a9fff">)</span><span style="color:#d4d4d4">;</span></div>
<div class="t m" style="left:4px;top:937.99px;height:25.78px;line-height:25.78px;font-size:17.25px;color:#8c8c8c">141</div>
<div class="t m" style="left:4px;top:963.77px;height:25.78px;line-height:25.78px;font-size:17.25px;color:#8c8c8c">142</div>
<div class="t m" style="left:113px;top:963.77px;height:25.78px;line-height:25.78px;font-size:17.25px;-webkit-text-stroke:0.3px"><span style="color:#569cd6">var</span><span style="color:#d4d4d4"> </span><span style="color:#d4d4d4">hLine2</span><span style="color:#d4d4d4"> </span><span style="color:#d4d4d4">=</span><span style="color:#d4d4d4"> </span><span style="color:#569cd6">new</span><span style="color:#d4d4d4"> </span><span style="color:#4ec9b0">Line</span><span style="color:#1a9fff">(</span><span style="color:#1a9fff">)</span><span style="color:#d4d4d4">;</span></div>
</div>
<div class="a" style="left:537px;top:188px;width:1588px;height:12px;background:linear-gradient(#1c1c1c,rgba(47,47,47,0));"></div>
<div class="a" style="left:2127px;top:190px;width:700px;height:6900px;transform:scale(0.085,0.1);transform-origin:0 0;opacity:0.62;filter:saturate(0.5)"><div class="m" style="height:25.78px;line-height:25.78px;font-size:17.25px;white-space:pre;color:transparent"><span style="background:#5f9150">// Line<span style="font-size:18.5px;-webkit-text-stroke:0">控件方法完整示例</span> - <span style="font-size:18.5px;-webkit-text-stroke:0">演示所有方法</span></span></div><div class="m" style="height:25.78px;line-height:25.78px;font-size:17.25px;white-space:pre;color:transparent"><span style="background:#569cd6">var</span> <span style="background:#d4d4d4">demoContainer</span> <span style="background:#d4d4d4">=</span> <span style="background:#569cd6">new</span> <span style="background:#4ec9b0">Vertical</span><span style="background:#1a9fff">(</span><span style="background:#1a9fff">)</span><span style="background:#d4d4d4">;</span></div><div class="m" style="height:25.78px;line-height:25.78px;font-size:17.25px;white-space:pre;color:transparent">&nbsp;</div><div class="m" style="height:25.78px;line-height:25.78px;font-size:17.25px;white-space:pre;color:transparent">    <span style="background:#569cd6">var</span> <span style="background:#d4d4d4">separator1</span> <span style="background:#d4d4d4">=</span> <span style="background:#569cd6">new</span> <span style="background:#4ec9b0">Space</span><span style="background:#1a9fff">(</span><span style="background:#1a9fff">)</span><span style="background:#d4d4d4">;</span></div><div class="m" style="height:25.78px;line-height:25.78px;font-size:17.25px;white-space:pre;color:transparent">    <span style="background:#d4d4d4">separator1</span><span style="background:#d4d4d4">.</span><span style="background:#d4d4d4">setHeight</span><span style="background:#1a9fff">(</span><span style="background:#b5cea8">10.0</span><span style="background:#1a9fff">)</span><span style="background:#d4d4d4">;</span></div><div class="m" style="height:25.78px;line-height:25.78px;font-size:17.25px;white-space:pre;color:transparent">&nbsp;</div><div class="m" style="height:25.78px;line-height:25.78px;font-size:17.25px;white-space:pre;color:transparent">    <span style="background:#d4d4d4">demoContainer</span><span style="background:#d4d4d4">.</span><span style="background:#d4d4d4">addView</span><span style="background:#1a9fff">(</span><span style="background:#d4d4d4">separator1</span><span style="background:#1a9fff">)</span><span style="background:#d4d4d4">;</span></div><div class="m" style="height:25.78px;line-height:25.78px;font-size:17.25px;white-space:pre;color:transparent">    <span style="background:#5f9150">// <span style="font-size:18.5px;-webkit-text-stroke:0">第二个方法：</span>setHeight<span style="font-size:18.5px;-webkit-text-stroke:0">设置线条高度演示</span></span></div><div class="m" style="height:25.78px;line-height:25.78px;font-size:17.25px;white-space:pre;color:transparent">    <span style="background:#569cd6">var</span> <span style="background:#d4d4d4">heightDemo</span> <span style="background:#d4d4d4">=</span> <span style="background:#569cd6">new</span> <span style="background:#4ec9b0">Vertical</span><span style="background:#1a9fff">(</span><span style="background:#1a9fff">)</span><span style="background:#d4d4d4">;</span></div><div class="m" style="height:25.78px;line-height:25.78px;font-size:17.25px;white-space:pre;color:transparent">    <span style="background:#d4d4d4">heightDemo</span><span style="background:#d4d4d4">.</span><span style="background:#d4d4d4">setSpacing</span><span style="background:#1a9fff">(</span><span style="background:#b5cea8">10</span><span style="background:#1a9fff">)</span><span style="background:#d4d4d4">;</span></div><div class="m" style="height:25.78px;line-height:25.78px;font-size:17.25px;white-space:pre;color:transparent">    <span style="background:#569cd6">var</span> <span style="background:#d4d4d4">heightLabel</span> <span style="background:#d4d4d4">=</span> <span style="background:#569cd6">new</span> <span style="background:#4ec9b0">Label</span><span style="background:#1a9fff">(</span><span style="background:#1a9fff">)</span><span style="background:#d4d4d4">;</span></div><div class="m" style="height:25.78px;line-height:25.78px;font-size:17.25px;white-space:pre;color:transparent">&nbsp;</div><div class="m" style="height:25.78px;line-height:25.78px;font-size:17.25px;white-space:pre;color:transparent">    <span style="background:#d4d4d4">heightLabel</span><span style="background:#d4d4d4">.</span><span style="background:#d4d4d4">setText</span><span style="background:#1a9fff">(</span><span style="background:#ce9178">"📌 setHeight<span style="font-size:18.5px;-webkit-text-stroke:0">设置线条高度</span>"</span><span style="background:#1a9fff">)</span><span style="background:#d4d4d4">;</span></div><div class="m" style="height:25.78px;line-height:25.78px;font-size:17.25px;white-space:pre;color:transparent">    <span style="background:#d4d4d4">heightLabel</span><span style="background:#d4d4d4">.</span><span style="background:#d4d4d4">setFontSize</span><span style="background:#1a9fff">(</span><span style="background:#b5cea8">16.0</span><span style="background:#1a9fff">)</span><span style="background:#d4d4d4">;</span></div><div class="m" style="height:25.78px;line-height:25.78px;font-size:17.25px;white-space:pre;color:transparent">    <span style="background:#d4d4d4">heightLabel</span><span style="background:#d4d4d4">.</span><span style="background:#d4d4d4">setTextColor</span><span style="background:#1a9fff">(</span><span style="background:#b5cea8">0</span><span style="background:#d4d4d4">,</span> <span style="background:#b5cea8">122</span><span style="background:#d4d4d4">,</span> <span style="background:#b5cea8">255</span><span style="background:#1a9fff">)</span><span style="background:#d4d4d4">;</span></div><div class="m" style="height:25.78px;line-height:25.78px;font-size:17.25px;white-space:pre;color:transparent">    <span style="background:#d4d4d4">heightDemo</span><span style="background:#d4d4d4">.</span><span style="background:#d4d4d4">addView</span><span style="background:#1a9fff">(</span><span style="background:#d4d4d4">heightLabel</span><span style="background:#1a9fff">)</span><span style="background:#d4d4d4">;</span></div><div class="m" style="height:25.78px;line-height:25.78px;font-size:17.25px;white-space:pre;color:transparent">    <span style="background:#569cd6">var</span> <span style="background:#d4d4d4">heightDesc</span> <span style="background:#d4d4d4">=</span> <span style="background:#569cd6">new</span> <span style="background:#4ec9b0">Label</span><span style="background:#1a9fff">(</span><span style="background:#1a9fff">)</span><span style="background:#d4d4d4">;</span></div><div class="m" style="height:25.78px;line-height:25.78px;font-size:17.25px;white-space:pre;color:transparent">&nbsp;</div><div class="m" style="height:25.78px;line-height:25.78px;font-size:17.25px;white-space:pre;color:transparent">    <span style="background:#d4d4d4">heightDesc</span><span style="background:#d4d4d4">.</span><span style="background:#d4d4d4">setText</span><span style="background:#1a9fff">(</span><span style="background:#ce9178">"<span style="font-size:18.5px;-webkit-text-stroke:0">创建不同高度的线条</span>:"</span><span style="background:#1a9fff">)</span><span style="background:#d4d4d4">;</span></div><div class="m" style="height:25.78px;line-height:25.78px;font-size:17.25px;white-space:pre;color:transparent">    <span style="background:#d4d4d4">heightDesc</span><span style="background:#d4d4d4">.</span><span style="background:#d4d4d4">setFontSize</span><span style="background:#1a9fff">(</span><span style="background:#b5cea8">14.0</span><span style="background:#1a9fff">)</span><span style="background:#d4d4d4">;</span></div><div class="m" style="height:25.78px;line-height:25.78px;font-size:17.25px;white-space:pre;color:transparent">    <span style="background:#d4d4d4">heightDesc</span><span style="background:#d4d4d4">.</span><span style="background:#d4d4d4">setTextColor</span><span style="background:#1a9fff">(</span><span style="background:#b5cea8">100</span><span style="background:#d4d4d4">,</span> <span style="background:#b5cea8">100</span><span style="background:#d4d4d4">,</span> <span style="background:#b5cea8">100</span><span style="background:#1a9fff">)</span><span style="background:#d4d4d4">;</span></div><div class="m" style="height:25.78px;line-height:25.78px;font-size:17.25px;white-space:pre;color:transparent">    <span style="background:#d4d4d4">heightDemo</span><span style="background:#d4d4d4">.</span><span style="background:#d4d4d4">addView</span><span style="background:#1a9fff">(</span><span style="background:#d4d4d4">heightDesc</span><span style="background:#1a9fff">)</span><span style="background:#d4d4d4">;</span></div><div class="m" style="height:25.78px;line-height:25.78px;font-size:17.25px;white-space:pre;color:transparent">    <span style="background:#5f9150">// <span style="font-size:18.5px;-webkit-text-stroke:0">创建不同高度的线条示例</span></span></div><div class="m" style="height:25.78px;line-height:25.78px;font-size:17.25px;white-space:pre;color:transparent">&nbsp;</div><div class="m" style="height:25.78px;line-height:25.78px;font-size:17.25px;white-space:pre;color:transparent">    <span style="background:#569cd6">var</span> <span style="background:#d4d4d4">hLine1</span> <span style="background:#d4d4d4">=</span> <span style="background:#569cd6">new</span> <span style="background:#4ec9b0">Line</span><span style="background:#1a9fff">(</span><span style="background:#1a9fff">)</span><span style="background:#d4d4d4">;</span></div><div class="m" style="height:25.78px;line-height:25.78px;font-size:17.25px;white-space:pre;color:transparent">    <span style="background:#d4d4d4">hLine1</span><span style="background:#d4d4d4">.</span><span style="background:#d4d4d4">setWidth</span><span style="background:#1a9fff">(</span><span style="background:#b5cea8">200.0</span><span style="background:#1a9fff">)</span><span style="background:#d4d4d4">;</span></div><div class="m" style="height:25.78px;line-height:25.78px;font-size:17.25px;white-space:pre;color:transparent">    <span style="background:#d4d4d4">hLine1</span><span style="background:#d4d4d4">.</span><span style="background:#d4d4d4">setHeight</span><span style="background:#1a9fff">(</span><span style="background:#b5cea8">2.0</span><span style="background:#1a9fff">)</span><span style="background:#d4d4d4">;</span> <span style="background:#5f9150">// <span style="font-size:18.5px;-webkit-text-stroke:0">设置线条高度为</span> 2</span></div><div class="m" style="height:25.78px;line-height:25.78px;font-size:17.25px;white-space:pre;color:transparent">    <span style="background:#d4d4d4">hLine1</span><span style="background:#d4d4d4">.</span><span style="background:#d4d4d4">setColor</span><span style="background:#1a9fff">(</span><span style="background:#b5cea8">255</span><span style="background:#d4d4d4">,</span> <span style="background:#b5cea8">165</span><span style="background:#d4d4d4">,</span> <span style="background:#b5cea8">0</span><span style="background:#1a9fff">)</span><span style="background:#d4d4d4">;</span> <span style="background:#5f9150">// <span style="font-size:18.5px;-webkit-text-stroke:0">橙色线条</span></span></div><div class="m" style="height:25.78px;line-height:25.78px;font-size:17.25px;white-space:pre;color:transparent">    <span style="background:#d4d4d4">heightDemo</span><span style="background:#d4d4d4">.</span><span style="background:#d4d4d4">addView</span><span style="background:#1a9fff">(</span><span style="background:#d4d4d4">hLine1</span><span style="background:#1a9fff">)</span><span style="background:#d4d4d4">;</span></div><div class="m" style="height:25.78px;line-height:25.78px;font-size:17.25px;white-space:pre;color:transparent">&nbsp;</div><div class="m" style="height:25.78px;line-height:25.78px;font-size:17.25px;white-space:pre;color:transparent">    <span style="background:#569cd6">var</span> <span style="background:#d4d4d4">hLineDesc1</span> <span style="background:#d4d4d4">=</span> <span style="background:#569cd6">new</span> <span style="background:#4ec9b0">Label</span><span style="background:#1a9fff">(</span><span style="background:#1a9fff">)</span><span style="background:#d4d4d4">;</span></div><div class="m" style="height:25.78px;line-height:25.78px;font-size:17.25px;white-space:pre;color:transparent">    <span style="background:#d4d4d4">hLineDesc1</span><span style="background:#d4d4d4">.</span><span style="background:#d4d4d4">setText</span><span style="background:#1a9fff">(</span><span style="background:#ce9178">"<span style="font-size:18.5px;-webkit-text-stroke:0">高度</span>: 2.0"</span><span style="background:#1a9fff">)</span><span style="background:#d4d4d4">;</span></div><div class="m" style="height:25.78px;line-height:25.78px;font-size:17.25px;white-space:pre;color:transparent">    <span style="background:#d4d4d4">hLineDesc1</span><span style="background:#d4d4d4">.</span><span style="background:#d4d4d4">setFontSize</span><span style="background:#1a9fff">(</span><span style="background:#b5cea8">12.0</span><span style="background:#1a9fff">)</span><span style="background:#d4d4d4">;</span></div><div class="m" style="height:25.78px;line-height:25.78px;font-size:17.25px;white-space:pre;color:transparent">    <span style="background:#d4d4d4">hLineDesc1</span><span style="background:#d4d4d4">.</span><span style="background:#d4d4d4">setTextColor</span><span style="background:#1a9fff">(</span><span style="background:#b5cea8">150</span><span style="background:#d4d4d4">,</span> <span style="background:#b5cea8">150</span><span style="background:#d4d4d4">,</span> <span style="background:#b5cea8">150</span><span style="background:#1a9fff">)</span><span style="background:#d4d4d4">;</span></div><div class="m" style="height:25.78px;line-height:25.78px;font-size:17.25px;white-space:pre;color:transparent">    <span style="background:#d4d4d4">heightDemo</span><span style="background:#d4d4d4">.</span><span style="background:#d4d4d4">addView</span><span style="background:#1a9fff">(</span><span style="background:#d4d4d4">hLineDesc1</span><span style="background:#1a9fff">)</span><span style="background:#d4d4d4">;</span></div><div class="m" style="height:25.78px;line-height:25.78px;font-size:17.25px;white-space:pre;color:transparent">&nbsp;</div><div class="m" style="height:25.78px;line-height:25.78px;font-size:17.25px;white-space:pre;color:transparent">    <span style="background:#569cd6">var</span> <span style="background:#d4d4d4">hLine2</span> <span style="background:#d4d4d4">=</span> <span style="background:#569cd6">new</span> <span style="background:#4ec9b0">Line</span><span style="background:#1a9fff">(</span><span style="background:#1a9fff">)</span><span style="background:#d4d4d4">;</span></div><div class="m" style="height:25.78px;line-height:25.78px;font-size:17.25px;white-space:pre;color:transparent">    <span style="background:#d4d4d4">widthDemo</span><span style="background:#d4d4d4">.</span><span style="background:#d4d4d4">addView</span><span style="background:#1a9fff">(</span><span style="background:#d4d4d4">widthDesc3</span><span style="background:#1a9fff">)</span><span style="background:#d4d4d4">;</span></div><div class="m" style="height:25.78px;line-height:25.78px;font-size:17.25px;white-space:pre;color:transparent">    <span style="background:#d4d4d4">demoContainer</span><span style="background:#d4d4d4">.</span><span style="background:#d4d4d4">addView</span><span style="background:#1a9fff">(</span><span style="background:#d4d4d4">widthDemo</span><span style="background:#1a9fff">)</span><span style="background:#d4d4d4">;</span></div><div class="m" style="height:25.78px;line-height:25.78px;font-size:17.25px;white-space:pre;color:transparent">    <span style="background:#5f9150">// <span style="font-size:18.5px;-webkit-text-stroke:0">添加分割空间</span></span></div><div class="m" style="height:25.78px;line-height:25.78px;font-size:17.25px;white-space:pre;color:transparent">    <span style="background:#569cd6">var</span> <span style="background:#d4d4d4">separator1</span> <span style="background:#d4d4d4">=</span> <span style="background:#569cd6">new</span> <span style="background:#4ec9b0">Space</span><span style="background:#1a9fff">(</span><span style="background:#1a9fff">)</span><span style="background:#d4d4d4">;</span></div><div class="m" style="height:25.78px;line-height:25.78px;font-size:17.25px;white-space:pre;color:transparent">&nbsp;</div><div class="m" style="height:25.78px;line-height:25.78px;font-size:17.25px;white-space:pre;color:transparent">    <span style="background:#d4d4d4">separator1</span><span style="background:#d4d4d4">.</span><span style="background:#d4d4d4">setHeight</span><span style="background:#1a9fff">(</span><span style="background:#b5cea8">10.0</span><span style="background:#1a9fff">)</span><span style="background:#d4d4d4">;</span></div><div class="m" style="height:25.78px;line-height:25.78px;font-size:17.25px;white-space:pre;color:transparent">    <span style="background:#d4d4d4">demoContainer</span><span style="background:#d4d4d4">.</span><span style="background:#d4d4d4">addView</span><span style="background:#1a9fff">(</span><span style="background:#d4d4d4">separator1</span><span style="background:#1a9fff">)</span><span style="background:#d4d4d4">;</span></div><div class="m" style="height:25.78px;line-height:25.78px;font-size:17.25px;white-space:pre;color:transparent">    <span style="background:#5f9150">// <span style="font-size:18.5px;-webkit-text-stroke:0">第二个方法：</span>setHeight<span style="font-size:18.5px;-webkit-text-stroke:0">设置线条高度演示</span></span></div><div class="m" style="height:25.78px;line-height:25.78px;font-size:17.25px;white-space:pre;color:transparent">    <span style="background:#569cd6">var</span> <span style="background:#d4d4d4">heightDemo</span> <span style="background:#d4d4d4">=</span> <span style="background:#569cd6">new</span> <span style="background:#4ec9b0">Vertical</span><span style="background:#1a9fff">(</span><span style="background:#1a9fff">)</span><span style="background:#d4d4d4">;</span></div><div class="m" style="height:25.78px;line-height:25.78px;font-size:17.25px;white-space:pre;color:transparent">    <span style="background:#d4d4d4">heightDemo</span><span style="background:#d4d4d4">.</span><span style="background:#d4d4d4">setSpacing</span><span style="background:#1a9fff">(</span><span style="background:#b5cea8">10</span><span style="background:#1a9fff">)</span><span style="background:#d4d4d4">;</span></div><div class="m" style="height:25.78px;line-height:25.78px;font-size:17.25px;white-space:pre;color:transparent">&nbsp;</div><div class="m" style="height:25.78px;line-height:25.78px;font-size:17.25px;white-space:pre;color:transparent">    <span style="background:#569cd6">var</span> <span style="background:#d4d4d4">heightLabel</span> <span style="background:#d4d4d4">=</span> <span style="background:#569cd6">new</span> <span style="background:#4ec9b0">Label</span><span style="background:#1a9fff">(</span><span style="background:#1a9fff">)</span><span style="background:#d4d4d4">;</span></div><div class="m" style="height:25.78px;line-height:25.78px;font-size:17.25px;white-space:pre;color:transparent">    <span style="background:#d4d4d4">heightLabel</span><span style="background:#d4d4d4">.</span><span style="background:#d4d4d4">setText</span><span style="background:#1a9fff">(</span><span style="background:#ce9178">"📌 setHeight<span style="font-size:18.5px;-webkit-text-stroke:0">设置线条高度</span>"</span><span style="background:#1a9fff">)</span><span style="background:#d4d4d4">;</span></div><div class="m" style="height:25.78px;line-height:25.78px;font-size:17.25px;white-space:pre;color:transparent">    <span style="background:#d4d4d4">heightLabel</span><span style="background:#d4d4d4">.</span><span style="background:#d4d4d4">setFontSize</span><span style="background:#1a9fff">(</span><span style="background:#b5cea8">16.0</span><span style="background:#1a9fff">)</span><span style="background:#d4d4d4">;</span></div><div class="m" style="height:25.78px;line-height:25.78px;font-size:17.25px;white-space:pre;color:transparent">    <span style="background:#d4d4d4">heightLabel</span><span style="background:#d4d4d4">.</span><span style="background:#d4d4d4">setTextColor</span><span style="background:#1a9fff">(</span><span style="background:#b5cea8">0</span><span style="background:#d4d4d4">,</span> <span style="background:#b5cea8">122</span><span style="background:#d4d4d4">,</span> <span style="background:#b5cea8">255</span><span style="background:#1a9fff">)</span><span style="background:#d4d4d4">;</span></div><div class="m" style="height:25.78px;line-height:25.78px;font-size:17.25px;white-space:pre;color:transparent">    <span style="background:#d4d4d4">heightDemo</span><span style="background:#d4d4d4">.</span><span style="background:#d4d4d4">addView</span><span style="background:#1a9fff">(</span><span style="background:#d4d4d4">heightLabel</span><span style="background:#1a9fff">)</span><span style="background:#d4d4d4">;</span></div><div class="m" style="height:25.78px;line-height:25.78px;font-size:17.25px;white-space:pre;color:transparent">&nbsp;</div><div class="m" style="height:25.78px;line-height:25.78px;font-size:17.25px;white-space:pre;color:transparent">    <span style="background:#569cd6">var</span> <span style="background:#d4d4d4">heightDesc</span> <span style="background:#d4d4d4">=</span> <span style="background:#569cd6">new</span> <span style="background:#4ec9b0">Label</span><span style="background:#1a9fff">(</span><span style="background:#1a9fff">)</span><span style="background:#d4d4d4">;</span></div><div class="m" style="height:25.78px;line-height:25.78px;font-size:17.25px;white-space:pre;color:transparent">    <span style="background:#d4d4d4">heightDesc</span><span style="background:#d4d4d4">.</span><span style="background:#d4d4d4">setText</span><span style="background:#1a9fff">(</span><span style="background:#ce9178">"<span style="font-size:18.5px;-webkit-text-stroke:0">创建不同高度的线条</span>:"</span><span style="background:#1a9fff">)</span><span style="background:#d4d4d4">;</span></div><div class="m" style="height:25.78px;line-height:25.78px;font-size:17.25px;white-space:pre;color:transparent">    <span style="background:#d4d4d4">heightDesc</span><span style="background:#d4d4d4">.</span><span style="background:#d4d4d4">setFontSize</span><span style="background:#1a9fff">(</span><span style="background:#b5cea8">14.0</span><span style="background:#1a9fff">)</span><span style="background:#d4d4d4">;</span></div><div class="m" style="height:25.78px;line-height:25.78px;font-size:17.25px;white-space:pre;color:transparent">    <span style="background:#d4d4d4">heightDesc</span><span style="background:#d4d4d4">.</span><span style="background:#d4d4d4">setTextColor</span><span style="background:#1a9fff">(</span><span style="background:#b5cea8">100</span><span style="background:#d4d4d4">,</span> <span style="background:#b5cea8">100</span><span style="background:#d4d4d4">,</span> <span style="background:#b5cea8">100</span><span style="background:#1a9fff">)</span><span style="background:#d4d4d4">;</span></div><div class="m" style="height:25.78px;line-height:25.78px;font-size:17.25px;white-space:pre;color:transparent">    <span style="background:#d4d4d4">heightDemo</span><span style="background:#d4d4d4">.</span><span style="background:#d4d4d4">addView</span><span style="background:#1a9fff">(</span><span style="background:#d4d4d4">heightDesc</span><span style="background:#1a9fff">)</span><span style="background:#d4d4d4">;</span></div><div class="m" style="height:25.78px;line-height:25.78px;font-size:17.25px;white-space:pre;color:transparent">&nbsp;</div><div class="m" style="height:25.78px;line-height:25.78px;font-size:17.25px;white-space:pre;color:transparent">    <span style="background:#5f9150">// <span style="font-size:18.5px;-webkit-text-stroke:0">创建不同高度的线条示例</span></span></div><div class="m" style="height:25.78px;line-height:25.78px;font-size:17.25px;white-space:pre;color:transparent">    <span style="background:#569cd6">var</span> <span style="background:#d4d4d4">hLine1</span> <span style="background:#d4d4d4">=</span> <span style="background:#569cd6">new</span> <span style="background:#4ec9b0">Line</span><span style="background:#1a9fff">(</span><span style="background:#1a9fff">)</span><span style="background:#d4d4d4">;</span></div><div class="m" style="height:25.78px;line-height:25.78px;font-size:17.25px;white-space:pre;color:transparent">    <span style="background:#d4d4d4">hLine1</span><span style="background:#d4d4d4">.</span><span style="background:#d4d4d4">setWidth</span><span style="background:#1a9fff">(</span><span style="background:#b5cea8">200.0</span><span style="background:#1a9fff">)</span><span style="background:#d4d4d4">;</span></div><div class="m" style="height:25.78px;line-height:25.78px;font-size:17.25px;white-space:pre;color:transparent">    <span style="background:#d4d4d4">hLine1</span><span style="background:#d4d4d4">.</span><span style="background:#d4d4d4">setHeight</span><span style="background:#1a9fff">(</span><span style="background:#b5cea8">2.0</span><span style="background:#1a9fff">)</span><span style="background:#d4d4d4">;</span> <span style="background:#5f9150">// <span style="font-size:18.5px;-webkit-text-stroke:0">设置线条高度为</span> 2</span></div><div class="m" style="height:25.78px;line-height:25.78px;font-size:17.25px;white-space:pre;color:transparent">    <span style="background:#d4d4d4">hLine1</span><span style="background:#d4d4d4">.</span><span style="background:#d4d4d4">setColor</span><span style="background:#1a9fff">(</span><span style="background:#b5cea8">255</span><span style="background:#d4d4d4">,</span> <span style="background:#b5cea8">165</span><span style="background:#d4d4d4">,</span> <span style="background:#b5cea8">0</span><span style="background:#1a9fff">)</span><span style="background:#d4d4d4">;</span> <span style="background:#5f9150">// <span style="font-size:18.5px;-webkit-text-stroke:0">橙色线条</span></span></div><div class="m" style="height:25.78px;line-height:25.78px;font-size:17.25px;white-space:pre;color:transparent">&nbsp;</div><div class="m" style="height:25.78px;line-height:25.78px;font-size:17.25px;white-space:pre;color:transparent">    <span style="background:#d4d4d4">heightDemo</span><span style="background:#d4d4d4">.</span><span style="background:#d4d4d4">addView</span><span style="background:#1a9fff">(</span><span style="background:#d4d4d4">hLine1</span><span style="background:#1a9fff">)</span><span style="background:#d4d4d4">;</span></div><div class="m" style="height:25.78px;line-height:25.78px;font-size:17.25px;white-space:pre;color:transparent">    <span style="background:#569cd6">var</span> <span style="background:#d4d4d4">hLineDesc1</span> <span style="background:#d4d4d4">=</span> <span style="background:#569cd6">new</span> <span style="background:#4ec9b0">Label</span><span style="background:#1a9fff">(</span><span style="background:#1a9fff">)</span><span style="background:#d4d4d4">;</span></div><div class="m" style="height:25.78px;line-height:25.78px;font-size:17.25px;white-space:pre;color:transparent">    <span style="background:#d4d4d4">hLineDesc1</span><span style="background:#d4d4d4">.</span><span style="background:#d4d4d4">setText</span><span style="background:#1a9fff">(</span><span style="background:#ce9178">"<span style="font-size:18.5px;-webkit-text-stroke:0">高度</span>: 2.0"</span><span style="background:#1a9fff">)</span><span style="background:#d4d4d4">;</span></div><div class="m" style="height:25.78px;line-height:25.78px;font-size:17.25px;white-space:pre;color:transparent">    <span style="background:#d4d4d4">hLineDesc1</span><span style="background:#d4d4d4">.</span><span style="background:#d4d4d4">setFontSize</span><span style="background:#1a9fff">(</span><span style="background:#b5cea8">12.0</span><span style="background:#1a9fff">)</span><span style="background:#d4d4d4">;</span></div><div class="m" style="height:25.78px;line-height:25.78px;font-size:17.25px;white-space:pre;color:transparent">    <span style="background:#d4d4d4">hLineDesc1</span><span style="background:#d4d4d4">.</span><span style="background:#d4d4d4">setTextColor</span><span style="background:#1a9fff">(</span><span style="background:#b5cea8">150</span><span style="background:#d4d4d4">,</span> <span style="background:#b5cea8">150</span><span style="background:#d4d4d4">,</span> <span style="background:#b5cea8">150</span><span style="background:#1a9fff">)</span><span style="background:#d4d4d4">;</span></div><div class="m" style="height:25.78px;line-height:25.78px;font-size:17.25px;white-space:pre;color:transparent">&nbsp;</div><div class="m" style="height:25.78px;line-height:25.78px;font-size:17.25px;white-space:pre;color:transparent">    <span style="background:#d4d4d4">heightDemo</span><span style="background:#d4d4d4">.</span><span style="background:#d4d4d4">addView</span><span style="background:#1a9fff">(</span><span style="background:#d4d4d4">hLineDesc1</span><span style="background:#1a9fff">)</span><span style="background:#d4d4d4">;</span></div><div class="m" style="height:25.78px;line-height:25.78px;font-size:17.25px;white-space:pre;color:transparent">    <span style="background:#569cd6">var</span> <span style="background:#d4d4d4">hLine2</span> <span style="background:#d4d4d4">=</span> <span style="background:#569cd6">new</span> <span style="background:#4ec9b0">Line</span><span style="background:#1a9fff">(</span><span style="background:#1a9fff">)</span><span style="background:#d4d4d4">;</span></div><div class="m" style="height:25.78px;line-height:25.78px;font-size:17.25px;white-space:pre;color:transparent">    <span style="background:#d4d4d4">widthDemo</span><span style="background:#d4d4d4">.</span><span style="background:#d4d4d4">addView</span><span style="background:#1a9fff">(</span><span style="background:#d4d4d4">widthDesc3</span><span style="background:#1a9fff">)</span><span style="background:#d4d4d4">;</span></div><div class="m" style="height:25.78px;line-height:25.78px;font-size:17.25px;white-space:pre;color:transparent">    <span style="background:#d4d4d4">demoContainer</span><span style="background:#d4d4d4">.</span><span style="background:#d4d4d4">addView</span><span style="background:#1a9fff">(</span><span style="background:#d4d4d4">widthDemo</span><span style="background:#1a9fff">)</span><span style="background:#d4d4d4">;</span></div><div class="m" style="height:25.78px;line-height:25.78px;font-size:17.25px;white-space:pre;color:transparent">    <span style="background:#5f9150">// <span style="font-size:18.5px;-webkit-text-stroke:0">添加分割空间</span></span></div><div class="m" style="height:25.78px;line-height:25.78px;font-size:17.25px;white-space:pre;color:transparent">&nbsp;</div><div class="m" style="height:25.78px;line-height:25.78px;font-size:17.25px;white-space:pre;color:transparent">    <span style="background:#569cd6">var</span> <span style="background:#d4d4d4">separator1</span> <span style="background:#d4d4d4">=</span> <span style="background:#569cd6">new</span> <span style="background:#4ec9b0">Space</span><span style="background:#1a9fff">(</span><span style="background:#1a9fff">)</span><span style="background:#d4d4d4">;</span></div><div class="m" style="height:25.78px;line-height:25.78px;font-size:17.25px;white-space:pre;color:transparent">    <span style="background:#d4d4d4">separator1</span><span style="background:#d4d4d4">.</span><span style="background:#d4d4d4">setHeight</span><span style="background:#1a9fff">(</span><span style="background:#b5cea8">10.0</span><span style="background:#1a9fff">)</span><span style="background:#d4d4d4">;</span></div><div class="m" style="height:25.78px;line-height:25.78px;font-size:17.25px;white-space:pre;color:transparent">    <span style="background:#d4d4d4">demoContainer</span><span style="background:#d4d4d4">.</span><span style="background:#d4d4d4">addView</span><span style="background:#1a9fff">(</span><span style="background:#d4d4d4">separator1</span><span style="background:#1a9fff">)</span><span style="background:#d4d4d4">;</span></div><div class="m" style="height:25.78px;line-height:25.78px;font-size:17.25px;white-space:pre;color:transparent">    <span style="background:#5f9150">// <span style="font-size:18.5px;-webkit-text-stroke:0">第二个方法：</span>setHeight<span style="font-size:18.5px;-webkit-text-stroke:0">设置线条高度演示</span></span></div><div class="m" style="height:25.78px;line-height:25.78px;font-size:17.25px;white-space:pre;color:transparent">    <span style="background:#569cd6">var</span> <span style="background:#d4d4d4">heightDemo</span> <span style="background:#d4d4d4">=</span> <span style="background:#569cd6">new</span> <span style="background:#4ec9b0">Vertical</span><span style="background:#1a9fff">(</span><span style="background:#1a9fff">)</span><span style="background:#d4d4d4">;</span></div><div class="m" style="height:25.78px;line-height:25.78px;font-size:17.25px;white-space:pre;color:transparent">&nbsp;</div><div class="m" style="height:25.78px;line-height:25.78px;font-size:17.25px;white-space:pre;color:transparent">    <span style="background:#d4d4d4">heightDemo</span><span style="background:#d4d4d4">.</span><span style="background:#d4d4d4">setSpacing</span><span style="background:#1a9fff">(</span><span style="background:#b5cea8">10</span><span style="background:#1a9fff">)</span><span style="background:#d4d4d4">;</span></div><div class="m" style="height:25.78px;line-height:25.78px;font-size:17.25px;white-space:pre;color:transparent">    <span style="background:#569cd6">var</span> <span style="background:#d4d4d4">heightLabel</span> <span style="background:#d4d4d4">=</span> <span style="background:#569cd6">new</span> <span style="background:#4ec9b0">Label</span><span style="background:#1a9fff">(</span><span style="background:#1a9fff">)</span><span style="background:#d4d4d4">;</span></div><div class="m" style="height:25.78px;line-height:25.78px;font-size:17.25px;white-space:pre;color:transparent">    <span style="background:#d4d4d4">heightLabel</span><span style="background:#d4d4d4">.</span><span style="background:#d4d4d4">setText</span><span style="background:#1a9fff">(</span><span style="background:#ce9178">"📌 setHeight<span style="font-size:18.5px;-webkit-text-stroke:0">设置线条高度</span>"</span><span style="background:#1a9fff">)</span><span style="background:#d4d4d4">;</span></div><div class="m" style="height:25.78px;line-height:25.78px;font-size:17.25px;white-space:pre;color:transparent">    <span style="background:#d4d4d4">heightLabel</span><span style="background:#d4d4d4">.</span><span style="background:#d4d4d4">setFontSize</span><span style="background:#1a9fff">(</span><span style="background:#b5cea8">16.0</span><span style="background:#1a9fff">)</span><span style="background:#d4d4d4">;</span></div><div class="m" style="height:25.78px;line-height:25.78px;font-size:17.25px;white-space:pre;color:transparent">    <span style="background:#d4d4d4">heightLabel</span><span style="background:#d4d4d4">.</span><span style="background:#d4d4d4">setTextColor</span><span style="background:#1a9fff">(</span><span style="background:#b5cea8">0</span><span style="background:#d4d4d4">,</span> <span style="background:#b5cea8">122</span><span style="background:#d4d4d4">,</span> <span style="background:#b5cea8">255</span><span style="background:#1a9fff">)</span><span style="background:#d4d4d4">;</span></div><div class="m" style="height:25.78px;line-height:25.78px;font-size:17.25px;white-space:pre;color:transparent">&nbsp;</div><div class="m" style="height:25.78px;line-height:25.78px;font-size:17.25px;white-space:pre;color:transparent">    <span style="background:#d4d4d4">heightDemo</span><span style="background:#d4d4d4">.</span><span style="background:#d4d4d4">addView</span><span style="background:#1a9fff">(</span><span style="background:#d4d4d4">heightLabel</span><span style="background:#1a9fff">)</span><span style="background:#d4d4d4">;</span></div><div class="m" style="height:25.78px;line-height:25.78px;font-size:17.25px;white-space:pre;color:transparent">    <span style="background:#569cd6">var</span> <span style="background:#d4d4d4">heightDesc</span> <span style="background:#d4d4d4">=</span> <span style="background:#569cd6">new</span> <span style="background:#4ec9b0">Label</span><span style="background:#1a9fff">(</span><span style="background:#1a9fff">)</span><span style="background:#d4d4d4">;</span></div><div class="m" style="height:25.78px;line-height:25.78px;font-size:17.25px;white-space:pre;color:transparent">    <span style="background:#d4d4d4">heightDesc</span><span style="background:#d4d4d4">.</span><span style="background:#d4d4d4">setText</span><span style="background:#1a9fff">(</span><span style="background:#ce9178">"<span style="font-size:18.5px;-webkit-text-stroke:0">创建不同高度的线条</span>:"</span><span style="background:#1a9fff">)</span><span style="background:#d4d4d4">;</span></div><div class="m" style="height:25.78px;line-height:25.78px;font-size:17.25px;white-space:pre;color:transparent">    <span style="background:#d4d4d4">heightDesc</span><span style="background:#d4d4d4">.</span><span style="background:#d4d4d4">setFontSize</span><span style="background:#1a9fff">(</span><span style="background:#b5cea8">14.0</span><span style="background:#1a9fff">)</span><span style="background:#d4d4d4">;</span></div><div class="m" style="height:25.78px;line-height:25.78px;font-size:17.25px;white-space:pre;color:transparent">    <span style="background:#d4d4d4">heightDesc</span><span style="background:#d4d4d4">.</span><span style="background:#d4d4d4">setTextColor</span><span style="background:#1a9fff">(</span><span style="background:#b5cea8">100</span><span style="background:#d4d4d4">,</span> <span style="background:#b5cea8">100</span><span style="background:#d4d4d4">,</span> <span style="background:#b5cea8">100</span><span style="background:#1a9fff">)</span><span style="background:#d4d4d4">;</span></div><div class="m" style="height:25.78px;line-height:25.78px;font-size:17.25px;white-space:pre;color:transparent">&nbsp;</div><div class="m" style="height:25.78px;line-height:25.78px;font-size:17.25px;white-space:pre;color:transparent">    <span style="background:#d4d4d4">heightDemo</span><span style="background:#d4d4d4">.</span><span style="background:#d4d4d4">addView</span><span style="background:#1a9fff">(</span><span style="background:#d4d4d4">heightDesc</span><span style="background:#1a9fff">)</span><span style="background:#d4d4d4">;</span></div><div class="m" style="height:25.78px;line-height:25.78px;font-size:17.25px;white-space:pre;color:transparent">    <span style="background:#5f9150">// <span style="font-size:18.5px;-webkit-text-stroke:0">创建不同高度的线条示例</span></span></div><div class="m" style="height:25.78px;line-height:25.78px;font-size:17.25px;white-space:pre;color:transparent">    <span style="background:#569cd6">var</span> <span style="background:#d4d4d4">hLine1</span> <span style="background:#d4d4d4">=</span> <span style="background:#569cd6">new</span> <span style="background:#4ec9b0">Line</span><span style="background:#1a9fff">(</span><span style="background:#1a9fff">)</span><span style="background:#d4d4d4">;</span></div><div class="m" style="height:25.78px;line-height:25.78px;font-size:17.25px;white-space:pre;color:transparent">    <span style="background:#d4d4d4">hLine1</span><span style="background:#d4d4d4">.</span><span style="background:#d4d4d4">setWidth</span><span style="background:#1a9fff">(</span><span style="background:#b5cea8">200.0</span><span style="background:#1a9fff">)</span><span style="background:#d4d4d4">;</span></div><div class="m" style="height:25.78px;line-height:25.78px;font-size:17.25px;white-space:pre;color:transparent">    <span style="background:#d4d4d4">hLine1</span><span style="background:#d4d4d4">.</span><span style="background:#d4d4d4">setHeight</span><span style="background:#1a9fff">(</span><span style="background:#b5cea8">2.0</span><span style="background:#1a9fff">)</span><span style="background:#d4d4d4">;</span> <span style="background:#5f9150">// <span style="font-size:18.5px;-webkit-text-stroke:0">设置线条高度为</span> 2</span></div><div class="m" style="height:25.78px;line-height:25.78px;font-size:17.25px;white-space:pre;color:transparent">&nbsp;</div><div class="m" style="height:25.78px;line-height:25.78px;font-size:17.25px;white-space:pre;color:transparent">    <span style="background:#d4d4d4">hLine1</span><span style="background:#d4d4d4">.</span><span style="background:#d4d4d4">setColor</span><span style="background:#1a9fff">(</span><span style="background:#b5cea8">255</span><span style="background:#d4d4d4">,</span> <span style="background:#b5cea8">165</span><span style="background:#d4d4d4">,</span> <span style="background:#b5cea8">0</span><span style="background:#1a9fff">)</span><span style="background:#d4d4d4">;</span> <span style="background:#5f9150">// <span style="font-size:18.5px;-webkit-text-stroke:0">橙色线条</span></span></div><div class="m" style="height:25.78px;line-height:25.78px;font-size:17.25px;white-space:pre;color:transparent">    <span style="background:#d4d4d4">heightDemo</span><span style="background:#d4d4d4">.</span><span style="background:#d4d4d4">addView</span><span style="background:#1a9fff">(</span><span style="background:#d4d4d4">hLine1</span><span style="background:#1a9fff">)</span><span style="background:#d4d4d4">;</span></div><div class="m" style="height:25.78px;line-height:25.78px;font-size:17.25px;white-space:pre;color:transparent">    <span style="background:#569cd6">var</span> <span style="background:#d4d4d4">hLineDesc1</span> <span style="background:#d4d4d4">=</span> <span style="background:#569cd6">new</span> <span style="background:#4ec9b0">Label</span><span style="background:#1a9fff">(</span><span style="background:#1a9fff">)</span><span style="background:#d4d4d4">;</span></div><div class="m" style="height:25.78px;line-height:25.78px;font-size:17.25px;white-space:pre;color:transparent">    <span style="background:#d4d4d4">hLineDesc1</span><span style="background:#d4d4d4">.</span><span style="background:#d4d4d4">setText</span><span style="background:#1a9fff">(</span><span style="background:#ce9178">"<span style="font-size:18.5px;-webkit-text-stroke:0">高度</span>: 2.0"</span><span style="background:#1a9fff">)</span><span style="background:#d4d4d4">;</span></div><div class="m" style="height:25.78px;line-height:25.78px;font-size:17.25px;white-space:pre;color:transparent">    <span style="background:#d4d4d4">hLineDesc1</span><span style="background:#d4d4d4">.</span><span style="background:#d4d4d4">setFontSize</span><span style="background:#1a9fff">(</span><span style="background:#b5cea8">12.0</span><span style="background:#1a9fff">)</span><span style="background:#d4d4d4">;</span></div><div class="m" style="height:25.78px;line-height:25.78px;font-size:17.25px;white-space:pre;color:transparent">&nbsp;</div><div class="m" style="height:25.78px;line-height:25.78px;font-size:17.25px;white-space:pre;color:transparent">    <span style="background:#d4d4d4">hLineDesc1</span><span style="background:#d4d4d4">.</span><span style="background:#d4d4d4">setTextColor</span><span style="background:#1a9fff">(</span><span style="background:#b5cea8">150</span><span style="background:#d4d4d4">,</span> <span style="background:#b5cea8">150</span><span style="background:#d4d4d4">,</span> <span style="background:#b5cea8">150</span><span style="background:#1a9fff">)</span><span style="background:#d4d4d4">;</span></div><div class="m" style="height:25.78px;line-height:25.78px;font-size:17.25px;white-space:pre;color:transparent">    <span style="background:#d4d4d4">heightDemo</span><span style="background:#d4d4d4">.</span><span style="background:#d4d4d4">addView</span><span style="background:#1a9fff">(</span><span style="background:#d4d4d4">hLineDesc1</span><span style="background:#1a9fff">)</span><span style="background:#d4d4d4">;</span></div><div class="m" style="height:25.78px;line-height:25.78px;font-size:17.25px;white-space:pre;color:transparent">    <span style="background:#569cd6">var</span> <span style="background:#d4d4d4">hLine2</span> <span style="background:#d4d4d4">=</span> <span style="background:#569cd6">new</span> <span style="background:#4ec9b0">Line</span><span style="background:#1a9fff">(</span><span style="background:#1a9fff">)</span><span style="background:#d4d4d4">;</span></div><div class="m" style="height:25.78px;line-height:25.78px;font-size:17.25px;white-space:pre;color:transparent">    <span style="background:#d4d4d4">widthDemo</span><span style="background:#d4d4d4">.</span><span style="background:#d4d4d4">addView</span><span style="background:#1a9fff">(</span><span style="background:#d4d4d4">widthDesc3</span><span style="background:#1a9fff">)</span><span style="background:#d4d4d4">;</span></div><div class="m" style="height:25.78px;line-height:25.78px;font-size:17.25px;white-space:pre;color:transparent">    <span style="background:#d4d4d4">demoContainer</span><span style="background:#d4d4d4">.</span><span style="background:#d4d4d4">addView</span><span style="background:#1a9fff">(</span><span style="background:#d4d4d4">widthDemo</span><span style="background:#1a9fff">)</span><span style="background:#d4d4d4">;</span></div><div class="m" style="height:25.78px;line-height:25.78px;font-size:17.25px;white-space:pre;color:transparent">&nbsp;</div><div class="m" style="height:25.78px;line-height:25.78px;font-size:17.25px;white-space:pre;color:transparent">    <span style="background:#5f9150">// <span style="font-size:18.5px;-webkit-text-stroke:0">添加分割空间</span></span></div><div class="m" style="height:25.78px;line-height:25.78px;font-size:17.25px;white-space:pre;color:transparent">    <span style="background:#569cd6">var</span> <span style="background:#d4d4d4">separator1</span> <span style="background:#d4d4d4">=</span> <span style="background:#569cd6">new</span> <span style="background:#4ec9b0">Space</span><span style="background:#1a9fff">(</span><span style="background:#1a9fff">)</span><span style="background:#d4d4d4">;</span></div><div class="m" style="height:25.78px;line-height:25.78px;font-size:17.25px;white-space:pre;color:transparent">    <span style="background:#d4d4d4">separator1</span><span style="background:#d4d4d4">.</span><span style="background:#d4d4d4">setHeight</span><span style="background:#1a9fff">(</span><span style="background:#b5cea8">10.0</span><span style="background:#1a9fff">)</span><span style="background:#d4d4d4">;</span></div><div class="m" style="height:25.78px;line-height:25.78px;font-size:17.25px;white-space:pre;color:transparent">    <span style="background:#d4d4d4">demoContainer</span><span style="background:#d4d4d4">.</span><span style="background:#d4d4d4">addView</span><span style="background:#1a9fff">(</span><span style="background:#d4d4d4">separator1</span><span style="background:#1a9fff">)</span><span style="background:#d4d4d4">;</span></div><div class="m" style="height:25.78px;line-height:25.78px;font-size:17.25px;white-space:pre;color:transparent">    <span style="background:#5f9150">// <span style="font-size:18.5px;-webkit-text-stroke:0">第二个方法：</span>setHeight<span style="font-size:18.5px;-webkit-text-stroke:0">设置线条高度演示</span></span></div><div class="m" style="height:25.78px;line-height:25.78px;font-size:17.25px;white-space:pre;color:transparent">&nbsp;</div><div class="m" style="height:25.78px;line-height:25.78px;font-size:17.25px;white-space:pre;color:transparent">    <span style="background:#569cd6">var</span> <span style="background:#d4d4d4">heightDemo</span> <span style="background:#d4d4d4">=</span> <span style="background:#569cd6">new</span> <span style="background:#4ec9b0">Vertical</span><span style="background:#1a9fff">(</span><span style="background:#1a9fff">)</span><span style="background:#d4d4d4">;</span></div><div class="m" style="height:25.78px;line-height:25.78px;font-size:17.25px;white-space:pre;color:transparent">    <span style="background:#d4d4d4">heightDemo</span><span style="background:#d4d4d4">.</span><span style="background:#d4d4d4">setSpacing</span><span style="background:#1a9fff">(</span><span style="background:#b5cea8">10</span><span style="background:#1a9fff">)</span><span style="background:#d4d4d4">;</span></div><div class="m" style="height:25.78px;line-height:25.78px;font-size:17.25px;white-space:pre;color:transparent">    <span style="background:#569cd6">var</span> <span style="background:#d4d4d4">heightLabel</span> <span style="background:#d4d4d4">=</span> <span style="background:#569cd6">new</span> <span style="background:#4ec9b0">Label</span><span style="background:#1a9fff">(</span><span style="background:#1a9fff">)</span><span style="background:#d4d4d4">;</span></div><div class="m" style="height:25.78px;line-height:25.78px;font-size:17.25px;white-space:pre;color:transparent">    <span style="background:#d4d4d4">heightLabel</span><span style="background:#d4d4d4">.</span><span style="background:#d4d4d4">setText</span><span style="background:#1a9fff">(</span><span style="background:#ce9178">"📌 setHeight<span style="font-size:18.5px;-webkit-text-stroke:0">设置线条高度</span>"</span><span style="background:#1a9fff">)</span><span style="background:#d4d4d4">;</span></div><div class="m" style="height:25.78px;line-height:25.78px;font-size:17.25px;white-space:pre;color:transparent">    <span style="background:#d4d4d4">heightLabel</span><span style="background:#d4d4d4">.</span><span style="background:#d4d4d4">setFontSize</span><span style="background:#1a9fff">(</span><span style="background:#b5cea8">16.0</span><span style="background:#1a9fff">)</span><span style="background:#d4d4d4">;</span></div><div class="m" style="height:25.78px;line-height:25.78px;font-size:17.25px;white-space:pre;color:transparent">&nbsp;</div><div class="m" style="height:25.78px;line-height:25.78px;font-size:17.25px;white-space:pre;color:transparent">    <span style="background:#d4d4d4">heightLabel</span><span style="background:#d4d4d4">.</span><span style="background:#d4d4d4">setTextColor</span><span style="background:#1a9fff">(</span><span style="background:#b5cea8">0</span><span style="background:#d4d4d4">,</span> <span style="background:#b5cea8">122</span><span style="background:#d4d4d4">,</span> <span style="background:#b5cea8">255</span><span style="background:#1a9fff">)</span><span style="background:#d4d4d4">;</span></div><div class="m" style="height:25.78px;line-height:25.78px;font-size:17.25px;white-space:pre;color:transparent">    <span style="background:#d4d4d4">heightDemo</span><span style="background:#d4d4d4">.</span><span style="background:#d4d4d4">addView</span><span style="background:#1a9fff">(</span><span style="background:#d4d4d4">heightLabel</span><span style="background:#1a9fff">)</span><span style="background:#d4d4d4">;</span></div><div class="m" style="height:25.78px;line-height:25.78px;font-size:17.25px;white-space:pre;color:transparent">    <span style="background:#569cd6">var</span> <span style="background:#d4d4d4">heightDesc</span> <span style="background:#d4d4d4">=</span> <span style="background:#569cd6">new</span> <span style="background:#4ec9b0">Label</span><span style="background:#1a9fff">(</span><span style="background:#1a9fff">)</span><span style="background:#d4d4d4">;</span></div><div class="m" style="height:25.78px;line-height:25.78px;font-size:17.25px;white-space:pre;color:transparent">    <span style="background:#d4d4d4">heightDesc</span><span style="background:#d4d4d4">.</span><span style="background:#d4d4d4">setText</span><span style="background:#1a9fff">(</span><span style="background:#ce9178">"<span style="font-size:18.5px;-webkit-text-stroke:0">创建不同高度的线条</span>:"</span><span style="background:#1a9fff">)</span><span style="background:#d4d4d4">;</span></div><div class="m" style="height:25.78px;line-height:25.78px;font-size:17.25px;white-space:pre;color:transparent">    <span style="background:#d4d4d4">heightDesc</span><span style="background:#d4d4d4">.</span><span style="background:#d4d4d4">setFontSize</span><span style="background:#1a9fff">(</span><span style="background:#b5cea8">14.0</span><span style="background:#1a9fff">)</span><span style="background:#d4d4d4">;</span></div><div class="m" style="height:25.78px;line-height:25.78px;font-size:17.25px;white-space:pre;color:transparent">&nbsp;</div><div class="m" style="height:25.78px;line-height:25.78px;font-size:17.25px;white-space:pre;color:transparent">    <span style="background:#d4d4d4">heightDesc</span><span style="background:#d4d4d4">.</span><span style="background:#d4d4d4">setTextColor</span><span style="background:#1a9fff">(</span><span style="background:#b5cea8">100</span><span style="background:#d4d4d4">,</span> <span style="background:#b5cea8">100</span><span style="background:#d4d4d4">,</span> <span style="background:#b5cea8">100</span><span style="background:#1a9fff">)</span><span style="background:#d4d4d4">;</span></div><div class="m" style="height:25.78px;line-height:25.78px;font-size:17.25px;white-space:pre;color:transparent">    <span style="background:#d4d4d4">heightDemo</span><span style="background:#d4d4d4">.</span><span style="background:#d4d4d4">addView</span><span style="background:#1a9fff">(</span><span style="background:#d4d4d4">heightDesc</span><span style="background:#1a9fff">)</span><span style="background:#d4d4d4">;</span></div><div class="m" style="height:25.78px;line-height:25.78px;font-size:17.25px;white-space:pre;color:transparent">    <span style="background:#5f9150">// <span style="font-size:18.5px;-webkit-text-stroke:0">创建不同高度的线条示例</span></span></div><div class="m" style="height:25.78px;line-height:25.78px;font-size:17.25px;white-space:pre;color:transparent">    <span style="background:#569cd6">var</span> <span style="background:#d4d4d4">hLine1</span> <span style="background:#d4d4d4">=</span> <span style="background:#569cd6">new</span> <span style="background:#4ec9b0">Line</span><span style="background:#1a9fff">(</span><span style="background:#1a9fff">)</span><span style="background:#d4d4d4">;</span></div><div class="m" style="height:25.78px;line-height:25.78px;font-size:17.25px;white-space:pre;color:transparent">    <span style="background:#d4d4d4">hLine1</span><span style="background:#d4d4d4">.</span><span style="background:#d4d4d4">setWidth</span><span style="background:#1a9fff">(</span><span style="background:#b5cea8">200.0</span><span style="background:#1a9fff">)</span><span style="background:#d4d4d4">;</span></div><div class="m" style="height:25.78px;line-height:25.78px;font-size:17.25px;white-space:pre;color:transparent">&nbsp;</div><div class="m" style="height:25.78px;line-height:25.78px;font-size:17.25px;white-space:pre;color:transparent">    <span style="background:#d4d4d4">hLine1</span><span style="background:#d4d4d4">.</span><span style="background:#d4d4d4">setHeight</span><span style="background:#1a9fff">(</span><span style="background:#b5cea8">2.0</span><span style="background:#1a9fff">)</span><span style="background:#d4d4d4">;</span> <span style="background:#5f9150">// <span style="font-size:18.5px;-webkit-text-stroke:0">设置线条高度为</span> 2</span></div><div class="m" style="height:25.78px;line-height:25.78px;font-size:17.25px;white-space:pre;color:transparent">    <span style="background:#d4d4d4">hLine1</span><span style="background:#d4d4d4">.</span><span style="background:#d4d4d4">setColor</span><span style="background:#1a9fff">(</span><span style="background:#b5cea8">255</span><span style="background:#d4d4d4">,</span> <span style="background:#b5cea8">165</span><span style="background:#d4d4d4">,</span> <span style="background:#b5cea8">0</span><span style="background:#1a9fff">)</span><span style="background:#d4d4d4">;</span> <span style="background:#5f9150">// <span style="font-size:18.5px;-webkit-text-stroke:0">橙色线条</span></span></div><div class="m" style="height:25.78px;line-height:25.78px;font-size:17.25px;white-space:pre;color:transparent">    <span style="background:#d4d4d4">heightDemo</span><span style="background:#d4d4d4">.</span><span style="background:#d4d4d4">addView</span><span style="background:#1a9fff">(</span><span style="background:#d4d4d4">hLine1</span><span style="background:#1a9fff">)</span><span style="background:#d4d4d4">;</span></div><div class="m" style="height:25.78px;line-height:25.78px;font-size:17.25px;white-space:pre;color:transparent">    <span style="background:#569cd6">var</span> <span style="background:#d4d4d4">hLineDesc1</span> <span style="background:#d4d4d4">=</span> <span style="background:#569cd6">new</span> <span style="background:#4ec9b0">Label</span><span style="background:#1a9fff">(</span><span style="background:#1a9fff">)</span><span style="background:#d4d4d4">;</span></div><div class="m" style="height:25.78px;line-height:25.78px;font-size:17.25px;white-space:pre;color:transparent">    <span style="background:#d4d4d4">hLineDesc1</span><span style="background:#d4d4d4">.</span><span style="background:#d4d4d4">setText</span><span style="background:#1a9fff">(</span><span style="background:#ce9178">"<span style="font-size:18.5px;-webkit-text-stroke:0">高度</span>: 2.0"</span><span style="background:#1a9fff">)</span><span style="background:#d4d4d4">;</span></div><div class="m" style="height:25.78px;line-height:25.78px;font-size:17.25px;white-space:pre;color:transparent">&nbsp;</div><div class="m" style="height:25.78px;line-height:25.78px;font-size:17.25px;white-space:pre;color:transparent">    <span style="background:#d4d4d4">hLineDesc1</span><span style="background:#d4d4d4">.</span><span style="background:#d4d4d4">setFontSize</span><span style="background:#1a9fff">(</span><span style="background:#b5cea8">12.0</span><span style="background:#1a9fff">)</span><span style="background:#d4d4d4">;</span></div><div class="m" style="height:25.78px;line-height:25.78px;font-size:17.25px;white-space:pre;color:transparent">    <span style="background:#d4d4d4">hLineDesc1</span><span style="background:#d4d4d4">.</span><span style="background:#d4d4d4">setTextColor</span><span style="background:#1a9fff">(</span><span style="background:#b5cea8">150</span><span style="background:#d4d4d4">,</span> <span style="background:#b5cea8">150</span><span style="background:#d4d4d4">,</span> <span style="background:#b5cea8">150</span><span style="background:#1a9fff">)</span><span style="background:#d4d4d4">;</span></div><div class="m" style="height:25.78px;line-height:25.78px;font-size:17.25px;white-space:pre;color:transparent">    <span style="background:#d4d4d4">heightDemo</span><span style="background:#d4d4d4">.</span><span style="background:#d4d4d4">addView</span><span style="background:#1a9fff">(</span><span style="background:#d4d4d4">hLineDesc1</span><span style="background:#1a9fff">)</span><span style="background:#d4d4d4">;</span></div><div class="m" style="height:25.78px;line-height:25.78px;font-size:17.25px;white-space:pre;color:transparent">    <span style="background:#569cd6">var</span> <span style="background:#d4d4d4">hLine2</span> <span style="background:#d4d4d4">=</span> <span style="background:#569cd6">new</span> <span style="background:#4ec9b0">Line</span><span style="background:#1a9fff">(</span><span style="background:#1a9fff">)</span><span style="background:#d4d4d4">;</span></div><div class="m" style="height:25.78px;line-height:25.78px;font-size:17.25px;white-space:pre;color:transparent">    <span style="background:#d4d4d4">widthDemo</span><span style="background:#d4d4d4">.</span><span style="background:#d4d4d4">addView</span><span style="background:#1a9fff">(</span><span style="background:#d4d4d4">widthDesc3</span><span style="background:#1a9fff">)</span><span style="background:#d4d4d4">;</span></div><div class="m" style="height:25.78px;line-height:25.78px;font-size:17.25px;white-space:pre;color:transparent">&nbsp;</div><div class="m" style="height:25.78px;line-height:25.78px;font-size:17.25px;white-space:pre;color:transparent">    <span style="background:#d4d4d4">demoContainer</span><span style="background:#d4d4d4">.</span><span style="background:#d4d4d4">addView</span><span style="background:#1a9fff">(</span><span style="background:#d4d4d4">widthDemo</span><span style="background:#1a9fff">)</span><span style="background:#d4d4d4">;</span></div><div class="m" style="height:25.78px;line-height:25.78px;font-size:17.25px;white-space:pre;color:transparent">    <span style="background:#5f9150">// <span style="font-size:18.5px;-webkit-text-stroke:0">添加分割空间</span></span></div><div class="m" style="height:25.78px;line-height:25.78px;font-size:17.25px;white-space:pre;color:transparent">    <span style="background:#569cd6">var</span> <span style="background:#d4d4d4">separator1</span> <span style="background:#d4d4d4">=</span> <span style="background:#569cd6">new</span> <span style="background:#4ec9b0">Space</span><span style="background:#1a9fff">(</span><span style="background:#1a9fff">)</span><span style="background:#d4d4d4">;</span></div><div class="m" style="height:25.78px;line-height:25.78px;font-size:17.25px;white-space:pre;color:transparent">    <span style="background:#d4d4d4">separator1</span><span style="background:#d4d4d4">.</span><span style="background:#d4d4d4">setHeight</span><span style="background:#1a9fff">(</span><span style="background:#b5cea8">10.0</span><span style="background:#1a9fff">)</span><span style="background:#d4d4d4">;</span></div><div class="m" style="height:25.78px;line-height:25.78px;font-size:17.25px;white-space:pre;color:transparent">    <span style="background:#d4d4d4">demoContainer</span><span style="background:#d4d4d4">.</span><span style="background:#d4d4d4">addView</span><span style="background:#1a9fff">(</span><span style="background:#d4d4d4">separator1</span><span style="background:#1a9fff">)</span><span style="background:#d4d4d4">;</span></div><div class="m" style="height:25.78px;line-height:25.78px;font-size:17.25px;white-space:pre;color:transparent">&nbsp;</div><div class="m" style="height:25.78px;line-height:25.78px;font-size:17.25px;white-space:pre;color:transparent">    <span style="background:#5f9150">// <span style="font-size:18.5px;-webkit-text-stroke:0">第二个方法：</span>setHeight<span style="font-size:18.5px;-webkit-text-stroke:0">设置线条高度演示</span></span></div><div class="m" style="height:25.78px;line-height:25.78px;font-size:17.25px;white-space:pre;color:transparent">    <span style="background:#569cd6">var</span> <span style="background:#d4d4d4">heightDemo</span> <span style="background:#d4d4d4">=</span> <span style="background:#569cd6">new</span> <span style="background:#4ec9b0">Vertical</span><span style="background:#1a9fff">(</span><span style="background:#1a9fff">)</span><span style="background:#d4d4d4">;</span></div><div class="m" style="height:25.78px;line-height:25.78px;font-size:17.25px;white-space:pre;color:transparent">    <span style="background:#d4d4d4">heightDemo</span><span style="background:#d4d4d4">.</span><span style="background:#d4d4d4">setSpacing</span><span style="background:#1a9fff">(</span><span style="background:#b5cea8">10</span><span style="background:#1a9fff">)</span><span style="background:#d4d4d4">;</span></div><div class="m" style="height:25.78px;line-height:25.78px;font-size:17.25px;white-space:pre;color:transparent">    <span style="background:#569cd6">var</span> <span style="background:#d4d4d4">heightLabel</span> <span style="background:#d4d4d4">=</span> <span style="background:#569cd6">new</span> <span style="background:#4ec9b0">Label</span><span style="background:#1a9fff">(</span><span style="background:#1a9fff">)</span><span style="background:#d4d4d4">;</span></div><div class="m" style="height:25.78px;line-height:25.78px;font-size:17.25px;white-space:pre;color:transparent">    <span style="background:#d4d4d4">heightLabel</span><span style="background:#d4d4d4">.</span><span style="background:#d4d4d4">setText</span><span style="background:#1a9fff">(</span><span style="background:#ce9178">"📌 setHeight<span style="font-size:18.5px;-webkit-text-stroke:0">设置线条高度</span>"</span><span style="background:#1a9fff">)</span><span style="background:#d4d4d4">;</span></div><div class="m" style="height:25.78px;line-height:25.78px;font-size:17.25px;white-space:pre;color:transparent">&nbsp;</div><div class="m" style="height:25.78px;line-height:25.78px;font-size:17.25px;white-space:pre;color:transparent">    <span style="background:#d4d4d4">heightLabel</span><span style="background:#d4d4d4">.</span><span style="background:#d4d4d4">setFontSize</span><span style="background:#1a9fff">(</span><span style="background:#b5cea8">16.0</span><span style="background:#1a9fff">)</span><span style="background:#d4d4d4">;</span></div><div class="m" style="height:25.78px;line-height:25.78px;font-size:17.25px;white-space:pre;color:transparent">    <span style="background:#d4d4d4">heightLabel</span><span style="background:#d4d4d4">.</span><span style="background:#d4d4d4">setTextColor</span><span style="background:#1a9fff">(</span><span style="background:#b5cea8">0</span><span style="background:#d4d4d4">,</span> <span style="background:#b5cea8">122</span><span style="background:#d4d4d4">,</span> <span style="background:#b5cea8">255</span><span style="background:#1a9fff">)</span><span style="background:#d4d4d4">;</span></div><div class="m" style="height:25.78px;line-height:25.78px;font-size:17.25px;white-space:pre;color:transparent">    <span style="background:#d4d4d4">heightDemo</span><span style="background:#d4d4d4">.</span><span style="background:#d4d4d4">addView</span><span style="background:#1a9fff">(</span><span style="background:#d4d4d4">heightLabel</span><span style="background:#1a9fff">)</span><span style="background:#d4d4d4">;</span></div><div class="m" style="height:25.78px;line-height:25.78px;font-size:17.25px;white-space:pre;color:transparent">    <span style="background:#569cd6">var</span> <span style="background:#d4d4d4">heightDesc</span> <span style="background:#d4d4d4">=</span> <span style="background:#569cd6">new</span> <span style="background:#4ec9b0">Label</span><span style="background:#1a9fff">(</span><span style="background:#1a9fff">)</span><span style="background:#d4d4d4">;</span></div><div class="m" style="height:25.78px;line-height:25.78px;font-size:17.25px;white-space:pre;color:transparent">    <span style="background:#d4d4d4">heightDesc</span><span style="background:#d4d4d4">.</span><span style="background:#d4d4d4">setText</span><span style="background:#1a9fff">(</span><span style="background:#ce9178">"<span style="font-size:18.5px;-webkit-text-stroke:0">创建不同高度的线条</span>:"</span><span style="background:#1a9fff">)</span><span style="background:#d4d4d4">;</span></div><div class="m" style="height:25.78px;line-height:25.78px;font-size:17.25px;white-space:pre;color:transparent">&nbsp;</div><div class="m" style="height:25.78px;line-height:25.78px;font-size:17.25px;white-space:pre;color:transparent">    <span style="background:#d4d4d4">heightDesc</span><span style="background:#d4d4d4">.</span><span style="background:#d4d4d4">setFontSize</span><span style="background:#1a9fff">(</span><span style="background:#b5cea8">14.0</span><span style="background:#1a9fff">)</span><span style="background:#d4d4d4">;</span></div><div class="m" style="height:25.78px;line-height:25.78px;font-size:17.25px;white-space:pre;color:transparent">    <span style="background:#d4d4d4">heightDesc</span><span style="background:#d4d4d4">.</span><span style="background:#d4d4d4">setTextColor</span><span style="background:#1a9fff">(</span><span style="background:#b5cea8">100</span><span style="background:#d4d4d4">,</span> <span style="background:#b5cea8">100</span><span style="background:#d4d4d4">,</span> <span style="background:#b5cea8">100</span><span style="background:#1a9fff">)</span><span style="background:#d4d4d4">;</span></div><div class="m" style="height:25.78px;line-height:25.78px;font-size:17.25px;white-space:pre;color:transparent">    <span style="background:#d4d4d4">heightDemo</span><span style="background:#d4d4d4">.</span><span style="background:#d4d4d4">addView</span><span style="background:#1a9fff">(</span><span style="background:#d4d4d4">heightDesc</span><span style="background:#1a9fff">)</span><span style="background:#d4d4d4">;</span></div><div class="m" style="height:25.78px;line-height:25.78px;font-size:17.25px;white-space:pre;color:transparent">    <span style="background:#5f9150">// <span style="font-size:18.5px;-webkit-text-stroke:0">创建不同高度的线条示例</span></span></div><div class="m" style="height:25.78px;line-height:25.78px;font-size:17.25px;white-space:pre;color:transparent">    <span style="background:#569cd6">var</span> <span style="background:#d4d4d4">hLine1</span> <span style="background:#d4d4d4">=</span> <span style="background:#569cd6">new</span> <span style="background:#4ec9b0">Line</span><span style="background:#1a9fff">(</span><span style="background:#1a9fff">)</span><span style="background:#d4d4d4">;</span></div><div class="m" style="height:25.78px;line-height:25.78px;font-size:17.25px;white-space:pre;color:transparent">&nbsp;</div><div class="m" style="height:25.78px;line-height:25.78px;font-size:17.25px;white-space:pre;color:transparent">    <span style="background:#d4d4d4">hLine1</span><span style="background:#d4d4d4">.</span><span style="background:#d4d4d4">setWidth</span><span style="background:#1a9fff">(</span><span style="background:#b5cea8">200.0</span><span style="background:#1a9fff">)</span><span style="background:#d4d4d4">;</span></div><div class="m" style="height:25.78px;line-height:25.78px;font-size:17.25px;white-space:pre;color:transparent">    <span style="background:#d4d4d4">hLine1</span><span style="background:#d4d4d4">.</span><span style="background:#d4d4d4">setHeight</span><span style="background:#1a9fff">(</span><span style="background:#b5cea8">2.0</span><span style="background:#1a9fff">)</span><span style="background:#d4d4d4">;</span> <span style="background:#5f9150">// <span style="font-size:18.5px;-webkit-text-stroke:0">设置线条高度为</span> 2</span></div><div class="m" style="height:25.78px;line-height:25.78px;font-size:17.25px;white-space:pre;color:transparent">    <span style="background:#d4d4d4">hLine1</span><span style="background:#d4d4d4">.</span><span style="background:#d4d4d4">setColor</span><span style="background:#1a9fff">(</span><span style="background:#b5cea8">255</span><span style="background:#d4d4d4">,</span> <span style="background:#b5cea8">165</span><span style="background:#d4d4d4">,</span> <span style="background:#b5cea8">0</span><span style="background:#1a9fff">)</span><span style="background:#d4d4d4">;</span> <span style="background:#5f9150">// <span style="font-size:18.5px;-webkit-text-stroke:0">橙色线条</span></span></div><div class="m" style="height:25.78px;line-height:25.78px;font-size:17.25px;white-space:pre;color:transparent">    <span style="background:#d4d4d4">heightDemo</span><span style="background:#d4d4d4">.</span><span style="background:#d4d4d4">addView</span><span style="background:#1a9fff">(</span><span style="background:#d4d4d4">hLine1</span><span style="background:#1a9fff">)</span><span style="background:#d4d4d4">;</span></div><div class="m" style="height:25.78px;line-height:25.78px;font-size:17.25px;white-space:pre;color:transparent">    <span style="background:#569cd6">var</span> <span style="background:#d4d4d4">hLineDesc1</span> <span style="background:#d4d4d4">=</span> <span style="background:#569cd6">new</span> <span style="background:#4ec9b0">Label</span><span style="background:#1a9fff">(</span><span style="background:#1a9fff">)</span><span style="background:#d4d4d4">;</span></div><div class="m" style="height:25.78px;line-height:25.78px;font-size:17.25px;white-space:pre;color:transparent">&nbsp;</div><div class="m" style="height:25.78px;line-height:25.78px;font-size:17.25px;white-space:pre;color:transparent">    <span style="background:#d4d4d4">hLineDesc1</span><span style="background:#d4d4d4">.</span><span style="background:#d4d4d4">setText</span><span style="background:#1a9fff">(</span><span style="background:#ce9178">"<span style="font-size:18.5px;-webkit-text-stroke:0">高度</span>: 2.0"</span><span style="background:#1a9fff">)</span><span style="background:#d4d4d4">;</span></div><div class="m" style="height:25.78px;line-height:25.78px;font-size:17.25px;white-space:pre;color:transparent">    <span style="background:#d4d4d4">hLineDesc1</span><span style="background:#d4d4d4">.</span><span style="background:#d4d4d4">setFontSize</span><span style="background:#1a9fff">(</span><span style="background:#b5cea8">12.0</span><span style="background:#1a9fff">)</span><span style="background:#d4d4d4">;</span></div><div class="m" style="height:25.78px;line-height:25.78px;font-size:17.25px;white-space:pre;color:transparent">    <span style="background:#d4d4d4">hLineDesc1</span><span style="background:#d4d4d4">.</span><span style="background:#d4d4d4">setTextColor</span><span style="background:#1a9fff">(</span><span style="background:#b5cea8">150</span><span style="background:#d4d4d4">,</span> <span style="background:#b5cea8">150</span><span style="background:#d4d4d4">,</span> <span style="background:#b5cea8">150</span><span style="background:#1a9fff">)</span><span style="background:#d4d4d4">;</span></div><div class="m" style="height:25.78px;line-height:25.78px;font-size:17.25px;white-space:pre;color:transparent">    <span style="background:#d4d4d4">heightDemo</span><span style="background:#d4d4d4">.</span><span style="background:#d4d4d4">addView</span><span style="background:#1a9fff">(</span><span style="background:#d4d4d4">hLineDesc1</span><span style="background:#1a9fff">)</span><span style="background:#d4d4d4">;</span></div><div class="m" style="height:25.78px;line-height:25.78px;font-size:17.25px;white-space:pre;color:transparent">    <span style="background:#569cd6">var</span> <span style="background:#d4d4d4">hLine2</span> <span style="background:#d4d4d4">=</span> <span style="background:#569cd6">new</span> <span style="background:#4ec9b0">Line</span><span style="background:#1a9fff">(</span><span style="background:#1a9fff">)</span><span style="background:#d4d4d4">;</span></div><div class="m" style="height:25.78px;line-height:25.78px;font-size:17.25px;white-space:pre;color:transparent">&nbsp;</div><div class="m" style="height:25.78px;line-height:25.78px;font-size:17.25px;white-space:pre;color:transparent">    <span style="background:#d4d4d4">widthDemo</span><span style="background:#d4d4d4">.</span><span style="background:#d4d4d4">addView</span><span style="background:#1a9fff">(</span><span style="background:#d4d4d4">widthDesc3</span><span style="background:#1a9fff">)</span><span style="background:#d4d4d4">;</span></div><div class="m" style="height:25.78px;line-height:25.78px;font-size:17.25px;white-space:pre;color:transparent">    <span style="background:#d4d4d4">demoContainer</span><span style="background:#d4d4d4">.</span><span style="background:#d4d4d4">addView</span><span style="background:#1a9fff">(</span><span style="background:#d4d4d4">widthDemo</span><span style="background:#1a9fff">)</span><span style="background:#d4d4d4">;</span></div><div class="m" style="height:25.78px;line-height:25.78px;font-size:17.25px;white-space:pre;color:transparent">    <span style="background:#5f9150">// <span style="font-size:18.5px;-webkit-text-stroke:0">添加分割空间</span></span></div><div class="m" style="height:25.78px;line-height:25.78px;font-size:17.25px;white-space:pre;color:transparent">    <span style="background:#569cd6">var</span> <span style="background:#d4d4d4">separator1</span> <span style="background:#d4d4d4">=</span> <span style="background:#569cd6">new</span> <span style="background:#4ec9b0">Space</span><span style="background:#1a9fff">(</span><span style="background:#1a9fff">)</span><span style="background:#d4d4d4">;</span></div><div class="m" style="height:25.78px;line-height:25.78px;font-size:17.25px;white-space:pre;color:transparent">    <span style="background:#d4d4d4">separator1</span><span style="background:#d4d4d4">.</span><span style="background:#d4d4d4">setHeight</span><span style="background:#1a9fff">(</span><span style="background:#b5cea8">10.0</span><span style="background:#1a9fff">)</span><span style="background:#d4d4d4">;</span></div><div class="m" style="height:25.78px;line-height:25.78px;font-size:17.25px;white-space:pre;color:transparent">&nbsp;</div><div class="m" style="height:25.78px;line-height:25.78px;font-size:17.25px;white-space:pre;color:transparent">    <span style="background:#d4d4d4">demoContainer</span><span style="background:#d4d4d4">.</span><span style="background:#d4d4d4">addView</span><span style="background:#1a9fff">(</span><span style="background:#d4d4d4">separator1</span><span style="background:#1a9fff">)</span><span style="background:#d4d4d4">;</span></div><div class="m" style="height:25.78px;line-height:25.78px;font-size:17.25px;white-space:pre;color:transparent">    <span style="background:#5f9150">// <span style="font-size:18.5px;-webkit-text-stroke:0">第二个方法：</span>setHeight<span style="font-size:18.5px;-webkit-text-stroke:0">设置线条高度演示</span></span></div><div class="m" style="height:25.78px;line-height:25.78px;font-size:17.25px;white-space:pre;color:transparent">    <span style="background:#569cd6">var</span> <span style="background:#d4d4d4">heightDemo</span> <span style="background:#d4d4d4">=</span> <span style="background:#569cd6">new</span> <span style="background:#4ec9b0">Vertical</span><span style="background:#1a9fff">(</span><span style="background:#1a9fff">)</span><span style="background:#d4d4d4">;</span></div><div class="m" style="height:25.78px;line-height:25.78px;font-size:17.25px;white-space:pre;color:transparent">    <span style="background:#d4d4d4">heightDemo</span><span style="background:#d4d4d4">.</span><span style="background:#d4d4d4">setSpacing</span><span style="background:#1a9fff">(</span><span style="background:#b5cea8">10</span><span style="background:#1a9fff">)</span><span style="background:#d4d4d4">;</span></div><div class="m" style="height:25.78px;line-height:25.78px;font-size:17.25px;white-space:pre;color:transparent">    <span style="background:#569cd6">var</span> <span style="background:#d4d4d4">heightLabel</span> <span style="background:#d4d4d4">=</span> <span style="background:#569cd6">new</span> <span style="background:#4ec9b0">Label</span><span style="background:#1a9fff">(</span><span style="background:#1a9fff">)</span><span style="background:#d4d4d4">;</span></div><div class="m" style="height:25.78px;line-height:25.78px;font-size:17.25px;white-space:pre;color:transparent">&nbsp;</div><div class="m" style="height:25.78px;line-height:25.78px;font-size:17.25px;white-space:pre;color:transparent">    <span style="background:#d4d4d4">heightLabel</span><span style="background:#d4d4d4">.</span><span style="background:#d4d4d4">setText</span><span style="background:#1a9fff">(</span><span style="background:#ce9178">"📌 setHeight<span style="font-size:18.5px;-webkit-text-stroke:0">设置线条高度</span>"</span><span style="background:#1a9fff">)</span><span style="background:#d4d4d4">;</span></div><div class="m" style="height:25.78px;line-height:25.78px;font-size:17.25px;white-space:pre;color:transparent">    <span style="background:#d4d4d4">heightLabel</span><span style="background:#d4d4d4">.</span><span style="background:#d4d4d4">setFontSize</span><span style="background:#1a9fff">(</span><span style="background:#b5cea8">16.0</span><span style="background:#1a9fff">)</span><span style="background:#d4d4d4">;</span></div><div class="m" style="height:25.78px;line-height:25.78px;font-size:17.25px;white-space:pre;color:transparent">    <span style="background:#d4d4d4">heightLabel</span><span style="background:#d4d4d4">.</span><span style="background:#d4d4d4">setTextColor</span><span style="background:#1a9fff">(</span><span style="background:#b5cea8">0</span><span style="background:#d4d4d4">,</span> <span style="background:#b5cea8">122</span><span style="background:#d4d4d4">,</span> <span style="background:#b5cea8">255</span><span style="background:#1a9fff">)</span><span style="background:#d4d4d4">;</span></div><div class="m" style="height:25.78px;line-height:25.78px;font-size:17.25px;white-space:pre;color:transparent">    <span style="background:#d4d4d4">heightDemo</span><span style="background:#d4d4d4">.</span><span style="background:#d4d4d4">addView</span><span style="background:#1a9fff">(</span><span style="background:#d4d4d4">heightLabel</span><span style="background:#1a9fff">)</span><span style="background:#d4d4d4">;</span></div><div class="m" style="height:25.78px;line-height:25.78px;font-size:17.25px;white-space:pre;color:transparent">    <span style="background:#569cd6">var</span> <span style="background:#d4d4d4">heightDesc</span> <span style="background:#d4d4d4">=</span> <span style="background:#569cd6">new</span> <span style="background:#4ec9b0">Label</span><span style="background:#1a9fff">(</span><span style="background:#1a9fff">)</span><span style="background:#d4d4d4">;</span></div><div class="m" style="height:25.78px;line-height:25.78px;font-size:17.25px;white-space:pre;color:transparent">&nbsp;</div><div class="m" style="height:25.78px;line-height:25.78px;font-size:17.25px;white-space:pre;color:transparent">    <span style="background:#d4d4d4">heightDesc</span><span style="background:#d4d4d4">.</span><span style="background:#d4d4d4">setText</span><span style="background:#1a9fff">(</span><span style="background:#ce9178">"<span style="font-size:18.5px;-webkit-text-stroke:0">创建不同高度的线条</span>:"</span><span style="background:#1a9fff">)</span><span style="background:#d4d4d4">;</span></div><div class="m" style="height:25.78px;line-height:25.78px;font-size:17.25px;white-space:pre;color:transparent">    <span style="background:#d4d4d4">heightDesc</span><span style="background:#d4d4d4">.</span><span style="background:#d4d4d4">setFontSize</span><span style="background:#1a9fff">(</span><span style="background:#b5cea8">14.0</span><span style="background:#1a9fff">)</span><span style="background:#d4d4d4">;</span></div><div class="m" style="height:25.78px;line-height:25.78px;font-size:17.25px;white-space:pre;color:transparent">    <span style="background:#d4d4d4">heightDesc</span><span style="background:#d4d4d4">.</span><span style="background:#d4d4d4">setTextColor</span><span style="background:#1a9fff">(</span><span style="background:#b5cea8">100</span><span style="background:#d4d4d4">,</span> <span style="background:#b5cea8">100</span><span style="background:#d4d4d4">,</span> <span style="background:#b5cea8">100</span><span style="background:#1a9fff">)</span><span style="background:#d4d4d4">;</span></div><div class="m" style="height:25.78px;line-height:25.78px;font-size:17.25px;white-space:pre;color:transparent">    <span style="background:#d4d4d4">heightDemo</span><span style="background:#d4d4d4">.</span><span style="background:#d4d4d4">addView</span><span style="background:#1a9fff">(</span><span style="background:#d4d4d4">heightDesc</span><span style="background:#1a9fff">)</span><span style="background:#d4d4d4">;</span></div><div class="m" style="height:25.78px;line-height:25.78px;font-size:17.25px;white-space:pre;color:transparent">    <span style="background:#5f9150">// <span style="font-size:18.5px;-webkit-text-stroke:0">创建不同高度的线条示例</span></span></div><div class="m" style="height:25.78px;line-height:25.78px;font-size:17.25px;white-space:pre;color:transparent">&nbsp;</div><div class="m" style="height:25.78px;line-height:25.78px;font-size:17.25px;white-space:pre;color:transparent">    <span style="background:#569cd6">var</span> <span style="background:#d4d4d4">hLine1</span> <span style="background:#d4d4d4">=</span> <span style="background:#569cd6">new</span> <span style="background:#4ec9b0">Line</span><span style="background:#1a9fff">(</span><span style="background:#1a9fff">)</span><span style="background:#d4d4d4">;</span></div><div class="m" style="height:25.78px;line-height:25.78px;font-size:17.25px;white-space:pre;color:transparent">    <span style="background:#d4d4d4">hLine1</span><span style="background:#d4d4d4">.</span><span style="background:#d4d4d4">setWidth</span><span style="background:#1a9fff">(</span><span style="background:#b5cea8">200.0</span><span style="background:#1a9fff">)</span><span style="background:#d4d4d4">;</span></div><div class="m" style="height:25.78px;line-height:25.78px;font-size:17.25px;white-space:pre;color:transparent">    <span style="background:#d4d4d4">hLine1</span><span style="background:#d4d4d4">.</span><span style="background:#d4d4d4">setHeight</span><span style="background:#1a9fff">(</span><span style="background:#b5cea8">2.0</span><span style="background:#1a9fff">)</span><span style="background:#d4d4d4">;</span> <span style="background:#5f9150">// <span style="font-size:18.5px;-webkit-text-stroke:0">设置线条高度为</span> 2</span></div><div class="m" style="height:25.78px;line-height:25.78px;font-size:17.25px;white-space:pre;color:transparent">    <span style="background:#d4d4d4">hLine1</span><span style="background:#d4d4d4">.</span><span style="background:#d4d4d4">setColor</span><span style="background:#1a9fff">(</span><span style="background:#b5cea8">255</span><span style="background:#d4d4d4">,</span> <span style="background:#b5cea8">165</span><span style="background:#d4d4d4">,</span> <span style="background:#b5cea8">0</span><span style="background:#1a9fff">)</span><span style="background:#d4d4d4">;</span> <span style="background:#5f9150">// <span style="font-size:18.5px;-webkit-text-stroke:0">橙色线条</span></span></div><div class="m" style="height:25.78px;line-height:25.78px;font-size:17.25px;white-space:pre;color:transparent">    <span style="background:#d4d4d4">heightDemo</span><span style="background:#d4d4d4">.</span><span style="background:#d4d4d4">addView</span><span style="background:#1a9fff">(</span><span style="background:#d4d4d4">hLine1</span><span style="background:#1a9fff">)</span><span style="background:#d4d4d4">;</span></div><div class="m" style="height:25.78px;line-height:25.78px;font-size:17.25px;white-space:pre;color:transparent">&nbsp;</div><div class="m" style="height:25.78px;line-height:25.78px;font-size:17.25px;white-space:pre;color:transparent">    <span style="background:#569cd6">var</span> <span style="background:#d4d4d4">hLineDesc1</span> <span style="background:#d4d4d4">=</span> <span style="background:#569cd6">new</span> <span style="background:#4ec9b0">Label</span><span style="background:#1a9fff">(</span><span style="background:#1a9fff">)</span><span style="background:#d4d4d4">;</span></div><div class="m" style="height:25.78px;line-height:25.78px;font-size:17.25px;white-space:pre;color:transparent">    <span style="background:#d4d4d4">hLineDesc1</span><span style="background:#d4d4d4">.</span><span style="background:#d4d4d4">setText</span><span style="background:#1a9fff">(</span><span style="background:#ce9178">"<span style="font-size:18.5px;-webkit-text-stroke:0">高度</span>: 2.0"</span><span style="background:#1a9fff">)</span><span style="background:#d4d4d4">;</span></div><div class="m" style="height:25.78px;line-height:25.78px;font-size:17.25px;white-space:pre;color:transparent">    <span style="background:#d4d4d4">hLineDesc1</span><span style="background:#d4d4d4">.</span><span style="background:#d4d4d4">setFontSize</span><span style="background:#1a9fff">(</span><span style="background:#b5cea8">12.0</span><span style="background:#1a9fff">)</span><span style="background:#d4d4d4">;</span></div><div class="m" style="height:25.78px;line-height:25.78px;font-size:17.25px;white-space:pre;color:transparent">    <span style="background:#d4d4d4">hLineDesc1</span><span style="background:#d4d4d4">.</span><span style="background:#d4d4d4">setTextColor</span><span style="background:#1a9fff">(</span><span style="background:#b5cea8">150</span><span style="background:#d4d4d4">,</span> <span style="background:#b5cea8">150</span><span style="background:#d4d4d4">,</span> <span style="background:#b5cea8">150</span><span style="background:#1a9fff">)</span><span style="background:#d4d4d4">;</span></div><div class="m" style="height:25.78px;line-height:25.78px;font-size:17.25px;white-space:pre;color:transparent">    <span style="background:#d4d4d4">heightDemo</span><span style="background:#d4d4d4">.</span><span style="background:#d4d4d4">addView</span><span style="background:#1a9fff">(</span><span style="background:#d4d4d4">hLineDesc1</span><span style="background:#1a9fff">)</span><span style="background:#d4d4d4">;</span></div><div class="m" style="height:25.78px;line-height:25.78px;font-size:17.25px;white-space:pre;color:transparent">&nbsp;</div><div class="m" style="height:25.78px;line-height:25.78px;font-size:17.25px;white-space:pre;color:transparent">    <span style="background:#569cd6">var</span> <span style="background:#d4d4d4">hLine2</span> <span style="background:#d4d4d4">=</span> <span style="background:#569cd6">new</span> <span style="background:#4ec9b0">Line</span><span style="background:#1a9fff">(</span><span style="background:#1a9fff">)</span><span style="background:#d4d4d4">;</span></div><div class="m" style="height:25.78px;line-height:25.78px;font-size:17.25px;white-space:pre;color:transparent">    <span style="background:#d4d4d4">widthDemo</span><span style="background:#d4d4d4">.</span><span style="background:#d4d4d4">addView</span><span style="background:#1a9fff">(</span><span style="background:#d4d4d4">widthDesc3</span><span style="background:#1a9fff">)</span><span style="background:#d4d4d4">;</span></div><div class="m" style="height:25.78px;line-height:25.78px;font-size:17.25px;white-space:pre;color:transparent">    <span style="background:#d4d4d4">demoContainer</span><span style="background:#d4d4d4">.</span><span style="background:#d4d4d4">addView</span><span style="background:#1a9fff">(</span><span style="background:#d4d4d4">widthDemo</span><span style="background:#1a9fff">)</span><span style="background:#d4d4d4">;</span></div><div class="m" style="height:25.78px;line-height:25.78px;font-size:17.25px;white-space:pre;color:transparent">    <span style="background:#5f9150">// <span style="font-size:18.5px;-webkit-text-stroke:0">添加分割空间</span></span></div><div class="m" style="height:25.78px;line-height:25.78px;font-size:17.25px;white-space:pre;color:transparent">    <span style="background:#569cd6">var</span> <span style="background:#d4d4d4">separator1</span> <span style="background:#d4d4d4">=</span> <span style="background:#569cd6">new</span> <span style="background:#4ec9b0">Space</span><span style="background:#1a9fff">(</span><span style="background:#1a9fff">)</span><span style="background:#d4d4d4">;</span></div><div class="m" style="height:25.78px;line-height:25.78px;font-size:17.25px;white-space:pre;color:transparent">&nbsp;</div><div class="m" style="height:25.78px;line-height:25.78px;font-size:17.25px;white-space:pre;color:transparent">    <span style="background:#d4d4d4">separator1</span><span style="background:#d4d4d4">.</span><span style="background:#d4d4d4">setHeight</span><span style="background:#1a9fff">(</span><span style="background:#b5cea8">10.0</span><span style="background:#1a9fff">)</span><span style="background:#d4d4d4">;</span></div><div class="m" style="height:25.78px;line-height:25.78px;font-size:17.25px;white-space:pre;color:transparent">    <span style="background:#d4d4d4">demoContainer</span><span style="background:#d4d4d4">.</span><span style="background:#d4d4d4">addView</span><span style="background:#1a9fff">(</span><span style="background:#d4d4d4">separator1</span><span style="background:#1a9fff">)</span><span style="background:#d4d4d4">;</span></div><div class="m" style="height:25.78px;line-height:25.78px;font-size:17.25px;white-space:pre;color:transparent">    <span style="background:#5f9150">// <span style="font-size:18.5px;-webkit-text-stroke:0">第二个方法：</span>setHeight<span style="font-size:18.5px;-webkit-text-stroke:0">设置线条高度演示</span></span></div><div class="m" style="height:25.78px;line-height:25.78px;font-size:17.25px;white-space:pre;color:transparent">    <span style="background:#569cd6">var</span> <span style="background:#d4d4d4">heightDemo</span> <span style="background:#d4d4d4">=</span> <span style="background:#569cd6">new</span> <span style="background:#4ec9b0">Vertical</span><span style="background:#1a9fff">(</span><span style="background:#1a9fff">)</span><span style="background:#d4d4d4">;</span></div><div class="m" style="height:25.78px;line-height:25.78px;font-size:17.25px;white-space:pre;color:transparent">    <span style="background:#d4d4d4">heightDemo</span><span style="background:#d4d4d4">.</span><span style="background:#d4d4d4">setSpacing</span><span style="background:#1a9fff">(</span><span style="background:#b5cea8">10</span><span style="background:#1a9fff">)</span><span style="background:#d4d4d4">;</span></div><div class="m" style="height:25.78px;line-height:25.78px;font-size:17.25px;white-space:pre;color:transparent">&nbsp;</div><div class="m" style="height:25.78px;line-height:25.78px;font-size:17.25px;white-space:pre;color:transparent">    <span style="background:#569cd6">var</span> <span style="background:#d4d4d4">heightLabel</span> <span style="background:#d4d4d4">=</span> <span style="background:#569cd6">new</span> <span style="background:#4ec9b0">Label</span><span style="background:#1a9fff">(</span><span style="background:#1a9fff">)</span><span style="background:#d4d4d4">;</span></div><div class="m" style="height:25.78px;line-height:25.78px;font-size:17.25px;white-space:pre;color:transparent">    <span style="background:#d4d4d4">heightLabel</span><span style="background:#d4d4d4">.</span><span style="background:#d4d4d4">setText</span><span style="background:#1a9fff">(</span><span style="background:#ce9178">"📌 setHeight<span style="font-size:18.5px;-webkit-text-stroke:0">设置线条高度</span>"</span><span style="background:#1a9fff">)</span><span style="background:#d4d4d4">;</span></div><div class="m" style="height:25.78px;line-height:25.78px;font-size:17.25px;white-space:pre;color:transparent">    <span style="background:#d4d4d4">heightLabel</span><span style="background:#d4d4d4">.</span><span style="background:#d4d4d4">setFontSize</span><span style="background:#1a9fff">(</span><span style="background:#b5cea8">16.0</span><span style="background:#1a9fff">)</span><span style="background:#d4d4d4">;</span></div><div class="m" style="height:25.78px;line-height:25.78px;font-size:17.25px;white-space:pre;color:transparent">    <span style="background:#d4d4d4">heightLabel</span><span style="background:#d4d4d4">.</span><span style="background:#d4d4d4">setTextColor</span><span style="background:#1a9fff">(</span><span style="background:#b5cea8">0</span><span style="background:#d4d4d4">,</span> <span style="background:#b5cea8">122</span><span style="background:#d4d4d4">,</span> <span style="background:#b5cea8">255</span><span style="background:#1a9fff">)</span><span style="background:#d4d4d4">;</span></div><div class="m" style="height:25.78px;line-height:25.78px;font-size:17.25px;white-space:pre;color:transparent">    <span style="background:#d4d4d4">heightDemo</span><span style="background:#d4d4d4">.</span><span style="background:#d4d4d4">addView</span><span style="background:#1a9fff">(</span><span style="background:#d4d4d4">heightLabel</span><span style="background:#1a9fff">)</span><span style="background:#d4d4d4">;</span></div><div class="m" style="height:25.78px;line-height:25.78px;font-size:17.25px;white-space:pre;color:transparent">&nbsp;</div><div class="m" style="height:25.78px;line-height:25.78px;font-size:17.25px;white-space:pre;color:transparent">    <span style="background:#569cd6">var</span> <span style="background:#d4d4d4">heightDesc</span> <span style="background:#d4d4d4">=</span> <span style="background:#569cd6">new</span> <span style="background:#4ec9b0">Label</span><span style="background:#1a9fff">(</span><span style="background:#1a9fff">)</span><span style="background:#d4d4d4">;</span></div><div class="m" style="height:25.78px;line-height:25.78px;font-size:17.25px;white-space:pre;color:transparent">    <span style="background:#d4d4d4">heightDesc</span><span style="background:#d4d4d4">.</span><span style="background:#d4d4d4">setText</span><span style="background:#1a9fff">(</span><span style="background:#ce9178">"<span style="font-size:18.5px;-webkit-text-stroke:0">创建不同高度的线条</span>:"</span><span style="background:#1a9fff">)</span><span style="background:#d4d4d4">;</span></div><div class="m" style="height:25.78px;line-height:25.78px;font-size:17.25px;white-space:pre;color:transparent">    <span style="background:#d4d4d4">heightDesc</span><span style="background:#d4d4d4">.</span><span style="background:#d4d4d4">setFontSize</span><span style="background:#1a9fff">(</span><span style="background:#b5cea8">14.0</span><span style="background:#1a9fff">)</span><span style="background:#d4d4d4">;</span></div><div class="m" style="height:25.78px;line-height:25.78px;font-size:17.25px;white-space:pre;color:transparent">    <span style="background:#d4d4d4">heightDesc</span><span style="background:#d4d4d4">.</span><span style="background:#d4d4d4">setTextColor</span><span style="background:#1a9fff">(</span><span style="background:#b5cea8">100</span><span style="background:#d4d4d4">,</span> <span style="background:#b5cea8">100</span><span style="background:#d4d4d4">,</span> <span style="background:#b5cea8">100</span><span style="background:#1a9fff">)</span><span style="background:#d4d4d4">;</span></div><div class="m" style="height:25.78px;line-height:25.78px;font-size:17.25px;white-space:pre;color:transparent">    <span style="background:#d4d4d4">heightDemo</span><span style="background:#d4d4d4">.</span><span style="background:#d4d4d4">addView</span><span style="background:#1a9fff">(</span><span style="background:#d4d4d4">heightDesc</span><span style="background:#1a9fff">)</span><span style="background:#d4d4d4">;</span></div><div class="m" style="height:25.78px;line-height:25.78px;font-size:17.25px;white-space:pre;color:transparent">&nbsp;</div><div class="m" style="height:25.78px;line-height:25.78px;font-size:17.25px;white-space:pre;color:transparent">    <span style="background:#5f9150">// <span style="font-size:18.5px;-webkit-text-stroke:0">创建不同高度的线条示例</span></span></div><div class="m" style="height:25.78px;line-height:25.78px;font-size:17.25px;white-space:pre;color:transparent">    <span style="background:#569cd6">var</span> <span style="background:#d4d4d4">hLine1</span> <span style="background:#d4d4d4">=</span> <span style="background:#569cd6">new</span> <span style="background:#4ec9b0">Line</span><span style="background:#1a9fff">(</span><span style="background:#1a9fff">)</span><span style="background:#d4d4d4">;</span></div><div class="m" style="height:25.78px;line-height:25.78px;font-size:17.25px;white-space:pre;color:transparent">    <span style="background:#d4d4d4">hLine1</span><span style="background:#d4d4d4">.</span><span style="background:#d4d4d4">setWidth</span><span style="background:#1a9fff">(</span><span style="background:#b5cea8">200.0</span><span style="background:#1a9fff">)</span><span style="background:#d4d4d4">;</span></div><div class="m" style="height:25.78px;line-height:25.78px;font-size:17.25px;white-space:pre;color:transparent">    <span style="background:#d4d4d4">hLine1</span><span style="background:#d4d4d4">.</span><span style="background:#d4d4d4">setHeight</span><span style="background:#1a9fff">(</span><span style="background:#b5cea8">2.0</span><span style="background:#1a9fff">)</span><span style="background:#d4d4d4">;</span> <span style="background:#5f9150">// <span style="font-size:18.5px;-webkit-text-stroke:0">设置线条高度为</span> 2</span></div><div class="m" style="height:25.78px;line-height:25.78px;font-size:17.25px;white-space:pre;color:transparent">    <span style="background:#d4d4d4">hLine1</span><span style="background:#d4d4d4">.</span><span style="background:#d4d4d4">setColor</span><span style="background:#1a9fff">(</span><span style="background:#b5cea8">255</span><span style="background:#d4d4d4">,</span> <span style="background:#b5cea8">165</span><span style="background:#d4d4d4">,</span> <span style="background:#b5cea8">0</span><span style="background:#1a9fff">)</span><span style="background:#d4d4d4">;</span> <span style="background:#5f9150">// <span style="font-size:18.5px;-webkit-text-stroke:0">橙色线条</span></span></div><div class="m" style="height:25.78px;line-height:25.78px;font-size:17.25px;white-space:pre;color:transparent">&nbsp;</div><div class="m" style="height:25.78px;line-height:25.78px;font-size:17.25px;white-space:pre;color:transparent">    <span style="background:#d4d4d4">heightDemo</span><span style="background:#d4d4d4">.</span><span style="background:#d4d4d4">addView</span><span style="background:#1a9fff">(</span><span style="background:#d4d4d4">hLine1</span><span style="background:#1a9fff">)</span><span style="background:#d4d4d4">;</span></div><div class="m" style="height:25.78px;line-height:25.78px;font-size:17.25px;white-space:pre;color:transparent">    <span style="background:#569cd6">var</span> <span style="background:#d4d4d4">hLineDesc1</span> <span style="background:#d4d4d4">=</span> <span style="background:#569cd6">new</span> <span style="background:#4ec9b0">Label</span><span style="background:#1a9fff">(</span><span style="background:#1a9fff">)</span><span style="background:#d4d4d4">;</span></div><div class="m" style="height:25.78px;line-height:25.78px;font-size:17.25px;white-space:pre;color:transparent">    <span style="background:#d4d4d4">hLineDesc1</span><span style="background:#d4d4d4">.</span><span style="background:#d4d4d4">setText</span><span style="background:#1a9fff">(</span><span style="background:#ce9178">"<span style="font-size:18.5px;-webkit-text-stroke:0">高度</span>: 2.0"</span><span style="background:#1a9fff">)</span><span style="background:#d4d4d4">;</span></div><div class="m" style="height:25.78px;line-height:25.78px;font-size:17.25px;white-space:pre;color:transparent">    <span style="background:#d4d4d4">hLineDesc1</span><span style="background:#d4d4d4">.</span><span style="background:#d4d4d4">setFontSize</span><span style="background:#1a9fff">(</span><span style="background:#b5cea8">12.0</span><span style="background:#1a9fff">)</span><span style="background:#d4d4d4">;</span></div><div class="m" style="height:25.78px;line-height:25.78px;font-size:17.25px;white-space:pre;color:transparent">    <span style="background:#d4d4d4">hLineDesc1</span><span style="background:#d4d4d4">.</span><span style="background:#d4d4d4">setTextColor</span><span style="background:#1a9fff">(</span><span style="background:#b5cea8">150</span><span style="background:#d4d4d4">,</span> <span style="background:#b5cea8">150</span><span style="background:#d4d4d4">,</span> <span style="background:#b5cea8">150</span><span style="background:#1a9fff">)</span><span style="background:#d4d4d4">;</span></div><div class="m" style="height:25.78px;line-height:25.78px;font-size:17.25px;white-space:pre;color:transparent">&nbsp;</div><div class="m" style="height:25.78px;line-height:25.78px;font-size:17.25px;white-space:pre;color:transparent">    <span style="background:#d4d4d4">heightDemo</span><span style="background:#d4d4d4">.</span><span style="background:#d4d4d4">addView</span><span style="background:#1a9fff">(</span><span style="background:#d4d4d4">hLineDesc1</span><span style="background:#1a9fff">)</span><span style="background:#d4d4d4">;</span></div><div class="m" style="height:25.78px;line-height:25.78px;font-size:17.25px;white-space:pre;color:transparent">    <span style="background:#569cd6">var</span> <span style="background:#d4d4d4">hLine2</span> <span style="background:#d4d4d4">=</span> <span style="background:#569cd6">new</span> <span style="background:#4ec9b0">Line</span><span style="background:#1a9fff">(</span><span style="background:#1a9fff">)</span><span style="background:#d4d4d4">;</span></div><div class="m" style="height:25.78px;line-height:25.78px;font-size:17.25px;white-space:pre;color:transparent">    <span style="background:#d4d4d4">widthDemo</span><span style="background:#d4d4d4">.</span><span style="background:#d4d4d4">addView</span><span style="background:#1a9fff">(</span><span style="background:#d4d4d4">widthDesc3</span><span style="background:#1a9fff">)</span><span style="background:#d4d4d4">;</span></div><div class="m" style="height:25.78px;line-height:25.78px;font-size:17.25px;white-space:pre;color:transparent">    <span style="background:#d4d4d4">demoContainer</span><span style="background:#d4d4d4">.</span><span style="background:#d4d4d4">addView</span><span style="background:#1a9fff">(</span><span style="background:#d4d4d4">widthDemo</span><span style="background:#1a9fff">)</span><span style="background:#d4d4d4">;</span></div><div class="m" style="height:25.78px;line-height:25.78px;font-size:17.25px;white-space:pre;color:transparent">    <span style="background:#5f9150">// <span style="font-size:18.5px;-webkit-text-stroke:0">添加分割空间</span></span></div><div class="m" style="height:25.78px;line-height:25.78px;font-size:17.25px;white-space:pre;color:transparent">&nbsp;</div><div class="m" style="height:25.78px;line-height:25.78px;font-size:17.25px;white-space:pre;color:transparent">    <span style="background:#569cd6">var</span> <span style="background:#d4d4d4">separator1</span> <span style="background:#d4d4d4">=</span> <span style="background:#569cd6">new</span> <span style="background:#4ec9b0">Space</span><span style="background:#1a9fff">(</span><span style="background:#1a9fff">)</span><span style="background:#d4d4d4">;</span></div><div class="m" style="height:25.78px;line-height:25.78px;font-size:17.25px;white-space:pre;color:transparent">    <span style="background:#d4d4d4">separator1</span><span style="background:#d4d4d4">.</span><span style="background:#d4d4d4">setHeight</span><span style="background:#1a9fff">(</span><span style="background:#b5cea8">10.0</span><span style="background:#1a9fff">)</span><span style="background:#d4d4d4">;</span></div><div class="m" style="height:25.78px;line-height:25.78px;font-size:17.25px;white-space:pre;color:transparent">    <span style="background:#d4d4d4">demoContainer</span><span style="background:#d4d4d4">.</span><span style="background:#d4d4d4">addView</span><span style="background:#1a9fff">(</span><span style="background:#d4d4d4">separator1</span><span style="background:#1a9fff">)</span><span style="background:#d4d4d4">;</span></div><div class="m" style="height:25.78px;line-height:25.78px;font-size:17.25px;white-space:pre;color:transparent">    <span style="background:#5f9150">// <span style="font-size:18.5px;-webkit-text-stroke:0">第二个方法：</span>setHeight<span style="font-size:18.5px;-webkit-text-stroke:0">设置线条高度演示</span></span></div><div class="m" style="height:25.78px;line-height:25.78px;font-size:17.25px;white-space:pre;color:transparent">    <span style="background:#569cd6">var</span> <span style="background:#d4d4d4">heightDemo</span> <span style="background:#d4d4d4">=</span> <span style="background:#569cd6">new</span> <span style="background:#4ec9b0">Vertical</span><span style="background:#1a9fff">(</span><span style="background:#1a9fff">)</span><span style="background:#d4d4d4">;</span></div><div class="m" style="height:25.78px;line-height:25.78px;font-size:17.25px;white-space:pre;color:transparent">&nbsp;</div></div>
<div class="a" style="left:2175px;top:188px;width:37px;height:983px;background:#2f2f2f;"></div>
<div class="a" style="left:2125px;top:880px;width:87px;height:287px;background:#2f2f2f;"></div>
<div class="a" style="left:537px;top:1171px;width:1695px;height:46px;background:#404040;"></div>
<svg class="i" style="left:553px;top:1182px" width="25" height="26" viewBox="0 0 25 26"><rect x="0.5" y="0.5" width="24" height="25" rx="3" fill="#e4e4e4"/><rect x="4.5" y="5" width="2" height="2" fill="#555"/><rect x="9" y="5" width="10.5" height="2.2" fill="#555"/><rect x="4.5" y="9.5" width="2" height="2" fill="#555"/><rect x="9" y="9.5" width="10.5" height="2.2" fill="#555"/></svg>
<div class="t" style="left:587px;top:1186px;font-size:18px;color:#cfcfcf;">运行日志</div>
<div class="a" style="left:677px;top:1181px;width:182px;height:28px;background:#2a2a2a;border:1px solid #454545"></div>
<div class="a" style="left:817px;top:1182px;width:1px;height:26px;background:#3a3a3a;"></div>
<div class="t" style="left:679px;top:1186px;font-size:18px;color:#e6e6e6;">全部</div>
<svg class="i" style="left:830px;top:1189px" width="14" height="10" viewBox="0 0 14 10"><path d="M1 1 H13 L7 9 Z" fill="#cfcfcf"/></svg>
<svg class="i" style="left:885px;top:1181px" width="25" height="27" viewBox="0 0 25 27"><path d="M10 1.5 H15 V9 H10 Z" fill="none" stroke="#2f9fd8" stroke-width="2"/><path d="M3 12 Q3 9 6 9 H19 Q22 9 22 12 V14 H3 Z" fill="none" stroke="#2f9fd8" stroke-width="2"/><path d="M3 14 L1.5 25.5 H23.5 L22 14" fill="none" stroke="#2f9fd8" stroke-width="2"/><path d="M8 19 V25 M13 19 V25 M18 19 V25" stroke="#2f9fd8" stroke-width="2"/></svg>
<svg class="i" style="left:935px;top:1184px" width="25" height="25" viewBox="0 0 25 25"><path d="M8 2 H2 V23 H23 V15" fill="none" stroke="#e0e0e0" stroke-width="2"/><rect x="15" y="1.5" width="8" height="8" rx="2" fill="none" stroke="#e0e0e0" stroke-width="2"/><path d="M4 21 L12 13 M7 13 H12 V18" fill="none" stroke="#e0e0e0" stroke-width="2"/></svg>
<div class="t" style="left:573px;top:1231px;font-size:16px;color:#3aa0dc;">【系统日志】启动新建.js</div>
<div class="t" style="left:573px;top:1272px;font-size:16px;color:#3aa0dc;">【系统日志】Debug变量清理成功</div>
<div class="t" style="left:571px;top:1315.0px;font-size:16px;color:#c3c7cf;letter-spacing:0.7px">[2025-09-11 16:13:31]</div>
<div class="t" style="left:752px;top:1315.0px;font-size:16px;color:#ffe600;letter-spacing:0.5px">#0</div>
<div class="a" style="left:748px;top:1331.0px;width:28px;height:1.2px;background:#ffe600;"></div>
<div class="t" style="left:778px;top:1315.0px;font-size:16px;color:#c3c7cf;letter-spacing:0.92px">【String】=== Line控件方法完整示例 ===</div>
<div class="t" style="left:571px;top:1356.2px;font-size:16px;color:#c3c7cf;letter-spacing:0.7px">[2025-09-11 16:13:31]</div>
<div class="t" style="left:752px;top:1356.2px;font-size:16px;color:#ffe600;letter-spacing:0.5px">#0</div>
<div class="a" style="left:748px;top:1372.2px;width:28px;height:1.2px;background:#ffe600;"></div>
<div class="t" style="left:778px;top:1356.2px;font-size:16px;color:#c3c7cf;letter-spacing:0.92px">【String】Line控件完整示例已启动</div>
<div class="t" style="left:571px;top:1397.4px;font-size:16px;color:#c3c7cf;letter-spacing:0.7px">[2025-09-11 16:13:32]</div>
<div class="t" style="left:752px;top:1397.4px;font-size:16px;color:#ffe600;letter-spacing:0.5px">#0</div>
<div class="a" style="left:748px;top:1413.4px;width:28px;height:1.2px;background:#ffe600;"></div>
<div class="t" style="left:778px;top:1397.4px;font-size:16px;color:#c3c7cf;letter-spacing:0.92px">【String】Line示例界面已加载</div>
<div class="t" style="left:571px;top:1438.6px;font-size:16px;color:#c3c7cf;letter-spacing:0.7px">[2025-09-11 16:13:32]</div>
<div class="t" style="left:752px;top:1438.6px;font-size:16px;color:#ffe600;letter-spacing:0.5px">#0</div>
<div class="a" style="left:748px;top:1454.6px;width:28px;height:1.2px;background:#ffe600;"></div>
<div class="t" style="left:778px;top:1438.6px;font-size:16px;color:#c3c7cf;letter-spacing:0.92px">【String】Line示例界面构建完成</div>
<div class="a" style="left:2238px;top:153px;width:113px;height:37px;background:#3b3b3b;"></div>
<div class="a" style="left:2245px;top:157px;width:120px;height:29px;background:#383838;border:1.5px solid #9a9a9a;border-radius:7px"></div>
<svg class="i" style="left:2251px;top:161px" width="18" height="18" viewBox="0 0 18 18"><circle cx="8" cy="8" r="6.3" fill="none" stroke="#d0d0d0" stroke-width="1.8"/><path d="M12.5 12.5 L16 16" stroke="#d0d0d0" stroke-width="1.8"/></svg>
<div class="a" style="left:2238px;top:190px;width:113px;height:4px;background:#2a2a2a;"></div>
<div class="a" style="left:2238px;top:194px;width:113px;height:40px;background:#343434;"></div>
<div class="a" style="left:2238px;top:234px;width:113px;height:2px;background:#2c2c2c;"></div>
<svg class="i" style="left:2259px;top:208px" width="14" height="14" viewBox="0 0 14 14"><path d="M0.5 0.5 L13 7 L0.5 13.5 Z" fill="#c4c4c4"/></svg>
<div class="t" style="left:2288px;top:205px;font-size:19px;color:#cacaca;">UI-按钮</div>
<div class="a" style="left:2238px;top:236px;width:113px;height:40px;background:#343434;"></div>
<div class="a" style="left:2238px;top:276px;width:113px;height:2px;background:#2c2c2c;"></div>
<svg class="i" style="left:2259px;top:250px" width="14" height="14" viewBox="0 0 14 14"><path d="M0.5 0.5 L13 7 L0.5 13.5 Z" fill="#c4c4c4"/></svg>
<div class="t" style="left:2288px;top:247px;font-size:19px;color:#cacaca;">UI-标签</div>
<div class="a" style="left:2238px;top:278px;width:113px;height:40px;background:#343434;"></div>
<div class="a" style="left:2238px;top:318px;width:113px;height:2px;background:#2c2c2c;"></div>
<svg class="i" style="left:2259px;top:292px" width="14" height="14" viewBox="0 0 14 14"><path d="M0.5 0.5 L13 7 L0.5 13.5 Z" fill="#c4c4c4"/></svg>
<div class="t" style="left:2288px;top:289px;font-size:19px;color:#cacaca;">UI-垂直</div>
<div class="a" style="left:2238px;top:320px;width:113px;height:40px;background:#343434;"></div>
<div class="a" style="left:2238px;top:360px;width:113px;height:2px;background:#2c2c2c;"></div>
<svg class="i" style="left:2259px;top:334px" width="14" height="14" viewBox="0 0 14 14"><path d="M0.5 0.5 L13 7 L0.5 13.5 Z" fill="#c4c4c4"/></svg>
<div class="t" style="left:2288px;top:331px;font-size:19px;color:#cacaca;">UI-单选</div>
<div class="a" style="left:2238px;top:362px;width:113px;height:40px;background:#343434;"></div>
<div class="a" style="left:2238px;top:402px;width:113px;height:2px;background:#2c2c2c;"></div>
<svg class="i" style="left:2259px;top:376px" width="14" height="14" viewBox="0 0 14 14"><path d="M0.5 0.5 L13 7 L0.5 13.5 Z" fill="#c4c4c4"/></svg>
<div class="t" style="left:2288px;top:373px;font-size:19px;color:#cacaca;">UI-单选</div>
<div class="a" style="left:2238px;top:404px;width:113px;height:40px;background:#343434;"></div>
<div class="a" style="left:2238px;top:444px;width:113px;height:2px;background:#2c2c2c;"></div>
<svg class="i" style="left:2259px;top:418px" width="14" height="14" viewBox="0 0 14 14"><path d="M0.5 0.5 L13 7 L0.5 13.5 Z" fill="#c4c4c4"/></svg>
<div class="t" style="left:2288px;top:415px;font-size:19px;color:#cacaca;">UI-复选</div>
<div class="a" style="left:2238px;top:446px;width:113px;height:40px;background:#343434;"></div>
<div class="a" style="left:2238px;top:486px;width:113px;height:2px;background:#2c2c2c;"></div>
<svg class="i" style="left:2259px;top:460px" width="14" height="14" viewBox="0 0 14 14"><path d="M0.5 0.5 L13 7 L0.5 13.5 Z" fill="#c4c4c4"/></svg>
<div class="t" style="left:2288px;top:457px;font-size:19px;color:#cacaca;">UI-界面</div>
<div class="a" style="left:2238px;top:488px;width:113px;height:40px;background:#343434;"></div>
<div class="a" style="left:2238px;top:528px;width:113px;height:2px;background:#2c2c2c;"></div>
<svg class="i" style="left:2259px;top:502px" width="14" height="14" viewBox="0 0 14 14"><path d="M0.5 0.5 L13 7 L0.5 13.5 Z" fill="#c4c4c4"/></svg>
<div class="t" style="left:2288px;top:499px;font-size:19px;color:#cacaca;">UI-空白</div>
<div class="a" style="left:2238px;top:530px;width:113px;height:40px;background:#343434;"></div>
<div class="a" style="left:2238px;top:570px;width:113px;height:2px;background:#2c2c2c;"></div>
<svg class="i" style="left:2259px;top:544px" width="14" height="14" viewBox="0 0 14 14"><path d="M0.5 0.5 L13 7 L0.5 13.5 Z" fill="#c4c4c4"/></svg>
<div class="t" style="left:2288px;top:541px;font-size:19px;color:#cacaca;">UI-输入</div>
<div class="a" style="left:2238px;top:572px;width:113px;height:40px;background:#343434;"></div>
<div class="a" style="left:2238px;top:612px;width:113px;height:2px;background:#2c2c2c;"></div>
<svg class="i" style="left:2259px;top:586px" width="14" height="14" viewBox="0 0 14 14"><path d="M0.5 0.5 L13 7 L0.5 13.5 Z" fill="#c4c4c4"/></svg>
<div class="t" style="left:2288px;top:583px;font-size:19px;color:#cacaca;">UI-水平</div>
<div class="a" style="left:2238px;top:614px;width:113px;height:40px;background:#343434;"></div>
<div class="a" style="left:2238px;top:654px;width:113px;height:2px;background:#2c2c2c;"></div>
<svg class="i" style="left:2259px;top:628px" width="14" height="14" viewBox="0 0 14 14"><path d="M0.5 0.5 L13 7 L0.5 13.5 Z" fill="#c4c4c4"/></svg>
<div class="t" style="left:2288px;top:625px;font-size:19px;color:#cacaca;">WebView</div>
<div class="a" style="left:2238px;top:656px;width:113px;height:40px;background:#343434;"></div>
<div class="a" style="left:2238px;top:696px;width:113px;height:2px;background:#2c2c2c;"></div>
<svg class="i" style="left:2259px;top:670px" width="14" height="14" viewBox="0 0 14 14"><path d="M0.5 0.5 L13 7 L0.5 13.5 Z" fill="#c4c4c4"/></svg>
<div class="t" style="left:2288px;top:667px;font-size:19px;color:#cacaca;">YoloV5[</div>
<div class="a" style="left:2238px;top:698px;width:113px;height:40px;background:#343434;"></div>
<div class="a" style="left:2238px;top:738px;width:113px;height:2px;background:#2c2c2c;"></div>
<svg class="i" style="left:2259px;top:712px" width="14" height="14" viewBox="0 0 14 14"><path d="M0.5 0.5 L13 7 L0.5 13.5 Z" fill="#c4c4c4"/></svg>
<div class="t" style="left:2288px;top:709px;font-size:19px;color:#cacaca;">打印[pri</div>
<div class="a" style="left:2238px;top:740px;width:113px;height:40px;background:#343434;"></div>
<div class="a" style="left:2238px;top:780px;width:113px;height:2px;background:#2c2c2c;"></div>
<svg class="i" style="left:2259px;top:754px" width="14" height="14" viewBox="0 0 14 14"><path d="M0.5 0.5 L13 7 L0.5 13.5 Z" fill="#c4c4c4"/></svg>
<div class="t" style="left:2288px;top:751px;font-size:19px;color:#cacaca;">检测目标</div>
<div class="a" style="left:2238px;top:782px;width:113px;height:40px;background:#343434;"></div>
<div class="a" style="left:2238px;top:822px;width:113px;height:2px;background:#2c2c2c;"></div>
<svg class="i" style="left:2259px;top:796px" width="14" height="14" viewBox="0 0 14 14"><path d="M0.5 0.5 L13 7 L0.5 13.5 Z" fill="#c4c4c4"/></svg>
<div class="t" style="left:2288px;top:793px;font-size:19px;color:#cacaca;">剪贴板类</div>
<div class="a" style="left:2238px;top:824px;width:113px;height:40px;background:#343434;"></div>
<div class="a" style="left:2238px;top:864px;width:113px;height:2px;background:#2c2c2c;"></div>
<svg class="i" style="left:2259px;top:838px" width="14" height="14" viewBox="0 0 14 14"><path d="M0.5 0.5 L13 7 L0.5 13.5 Z" fill="#c4c4c4"/></svg>
<div class="t" style="left:2288px;top:835px;font-size:19px;color:#cacaca;">脚本项目</div>
<div class="a" style="left:2238px;top:866px;width:113px;height:40px;background:#343434;"></div>
<div class="a" style="left:2238px;top:906px;width:113px;height:2px;background:#2c2c2c;"></div>
<svg class="i" style="left:2259px;top:880px" width="14" height="14" viewBox="0 0 14 14"><path d="M0.5 0.5 L13 7 L0.5 13.5 Z" fill="#c4c4c4"/></svg>
<div class="t" style="left:2288px;top:877px;font-size:19px;color:#cacaca;">矩形类[r</div>
<div class="a" style="left:2238px;top:908px;width:113px;height:40px;background:#343434;"></div>
<div class="a" style="left:2238px;top:948px;width:113px;height:2px;background:#2c2c2c;"></div>
<svg class="i" style="left:2259px;top:922px" width="14" height="14" viewBox="0 0 14 14"><path d="M0.5 0.5 L13 7 L0.5 13.5 Z" fill="#c4c4c4"/></svg>
<div class="t" style="left:2288px;top:919px;font-size:19px;color:#cacaca;">快捷指令</div>
<div class="a" style="left:2238px;top:950px;width:113px;height:40px;background:#343434;"></div>
<div class="a" style="left:2238px;top:990px;width:113px;height:2px;background:#2c2c2c;"></div>
<svg class="i" style="left:2259px;top:964px" width="14" height="14" viewBox="0 0 14 14"><path d="M0.5 0.5 L13 7 L0.5 13.5 Z" fill="#c4c4c4"/></svg>
<div class="t" style="left:2288px;top:961px;font-size:19px;color:#cacaca;">快捷指令</div>
<div class="a" style="left:2238px;top:992px;width:113px;height:40px;background:#343434;"></div>
<div class="a" style="left:2238px;top:1032px;width:113px;height:2px;background:#2c2c2c;"></div>
<svg class="i" style="left:2259px;top:1006px" width="14" height="14" viewBox="0 0 14 14"><path d="M0.5 0.5 L13 7 L0.5 13.5 Z" fill="#c4c4c4"/></svg>
<div class="t" style="left:2288px;top:1003px;font-size:19px;color:#cacaca;">配置[co</div>
<div class="a" style="left:2238px;top:1034px;width:113px;height:40px;background:#343434;"></div>
<div class="a" style="left:2238px;top:1074px;width:113px;height:2px;background:#2c2c2c;"></div>
<svg class="i" style="left:2259px;top:1048px" width="14" height="14" viewBox="0 0 14 14"><path d="M0.5 0.5 L13 7 L0.5 13.5 Z" fill="#c4c4c4"/></svg>
<div class="t" style="left:2288px;top:1045px;font-size:19px;color:#cacaca;">屏幕类[s</div>
<div class="a" style="left:2238px;top:1076px;width:113px;height:40px;background:#343434;"></div>
<div class="a" style="left:2238px;top:1116px;width:113px;height:2px;background:#2c2c2c;"></div>
<svg class="i" style="left:2259px;top:1090px" width="14" height="14" viewBox="0 0 14 14"><path d="M0.5 0.5 L13 7 L0.5 13.5 Z" fill="#c4c4c4"/></svg>
<div class="t" style="left:2288px;top:1087px;font-size:19px;color:#cacaca;">事件[eve</div>
<div class="a" style="left:2238px;top:1118px;width:113px;height:40px;background:#343434;"></div>
<div class="a" style="left:2238px;top:1158px;width:113px;height:2px;background:#2c2c2c;"></div>
<svg class="i" style="left:2259px;top:1132px" width="14" height="14" viewBox="0 0 14 14"><path d="M0.5 0.5 L13 7 L0.5 13.5 Z" fill="#c4c4c4"/></svg>
<div class="t" style="left:2288px;top:1129px;font-size:19px;color:#cacaca;">随机数[</div>
<div class="a" style="left:2238px;top:1160px;width:113px;height:40px;background:#343434;"></div>
<div class="a" style="left:2238px;top:1200px;width:113px;height:2px;background:#2c2c2c;"></div>
<svg class="i" style="left:2259px;top:1174px" width="14" height="14" viewBox="0 0 14 14"><path d="M0.5 0.5 L13 7 L0.5 13.5 Z" fill="#c4c4c4"/></svg>
<div class="t" style="left:2288px;top:1171px;font-size:19px;color:#cacaca;">图色视觉</div>
<div class="a" style="left:2238px;top:1202px;width:113px;height:40px;background:#343434;"></div>
<div class="a" style="left:2238px;top:1242px;width:113px;height:2px;background:#2c2c2c;"></div>
<svg class="i" style="left:2259px;top:1216px" width="14" height="14" viewBox="0 0 14 14"><path d="M0.5 0.5 L13 7 L0.5 13.5 Z" fill="#c4c4c4"/></svg>
<div class="t" style="left:2288px;top:1213px;font-size:19px;color:#cacaca;">图像类[</div>
<div class="a" style="left:2238px;top:1244px;width:113px;height:40px;background:#343434;"></div>
<div class="a" style="left:2238px;top:1284px;width:113px;height:2px;background:#2c2c2c;"></div>
<svg class="i" style="left:2259px;top:1258px" width="14" height="14" viewBox="0 0 14 14"><path d="M0.5 0.5 L13 7 L0.5 13.5 Z" fill="#c4c4c4"/></svg>
<div class="t" style="left:2288px;top:1255px;font-size:19px;color:#cacaca;">吐司[toa</div>
<div class="a" style="left:2238px;top:1286px;width:113px;height:40px;background:#363636;"></div>
<svg class="i" style="left:2258px;top:1300px" width="15" height="14" viewBox="0 0 15 14"><path d="M0.5 0.5 H14.5 L7.5 13.5 Z" fill="#c4c4c4"/></svg>
<div class="t" style="left:2288px;top:1297px;font-size:19px;color:#cacaca;">线条类[l</div>
<div class="a" style="left:2238px;top:1326px;width:113px;height:90px;background:#2e2e2e;"></div>
<div class="t" style="left:2292px;top:1327.0px;font-size:19px;color:#cacaca;">setWidth</div>
<div class="t" style="left:2292px;top:1357.3px;font-size:19px;color:#cacaca;">setHeight</div>
<div class="t" style="left:2292px;top:1387.6px;font-size:19px;color:#cacaca;">setColor</div>
<div class="a" style="left:2238px;top:1418px;width:113px;height:48px;background:#343434;"></div>
<svg class="i" style="left:2258px;top:1432px" width="15" height="14" viewBox="0 0 15 14"><path d="M0.5 0.5 H14.5 L7.5 13.5 Z" fill="#c4c4c4"/></svg>
<div class="t" style="left:2288px;top:1429px;font-size:19px;color:#cacaca;">延时等待</div>
</body></html>
